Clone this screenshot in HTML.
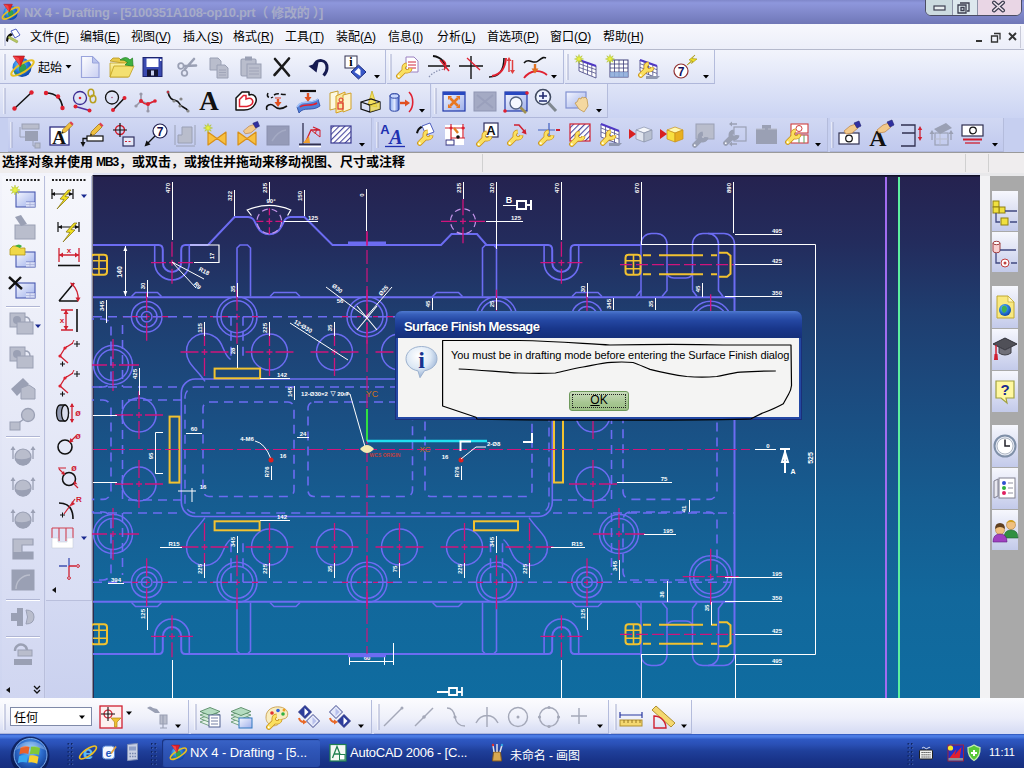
<!DOCTYPE html>
<html lang="zh"><head><meta charset="utf-8"><title>NX 4 - Drafting</title>
<style>
html,body{margin:0;padding:0}
body{width:1024px;height:768px;position:relative;overflow:hidden;background:#dfe3f4;font-family:"Liberation Sans","Noto Sans CJK SC",sans-serif;font-size:12px;color:#000}
.a{position:absolute}
#title{left:0;top:0;width:1024px;height:24px;background:linear-gradient(#7f87c9 0,#8e97dc 12%,#858dd0 40%,#7880c2 75%,#6f77b6 100%)}
#title .t{left:24px;top:2px;font:bold 13px "Liberation Sans","Noto Sans CJK SC",sans-serif;color:#a6abc8;white-space:nowrap;letter-spacing:-0.31px}
#menu{left:0;top:24px;width:1024px;height:25px;background:linear-gradient(#f7f8fd,#eceef9)}
#menu span{position:absolute;top:3px;font-size:12px;white-space:nowrap}
.tb{border-right:1px solid #b4bcdc;border-bottom:1px solid #afb7da;box-sizing:border-box}
.sep{width:1px;background:#a9afcf;border-right:1px solid #fff}
#cue{left:0;top:152px;width:1024px;height:21px;background:#efedee;border-top:1px solid #9a9a9a;box-sizing:border-box}
#cue .t{left:2px;top:-2px;font:bold 13px "Liberation Sans","Noto Sans CJK SC",sans-serif;white-space:nowrap}
#task{left:0;top:734px;width:1024px;height:34px;background:linear-gradient(#2950b4 0,#4f80ea 5%,#4878e0 9%,#2e58c2 16%,#2a50b6 30%,#1f3f9a 50%,#19348a 75%,#162e7e 100%)}
.tbtn{top:5px;height:28px;color:#fff;font-size:13px;white-space:nowrap;box-sizing:border-box;border-radius:3px}
.tbtn span{position:absolute;top:6px;letter-spacing:-0.1px}
</style></head><body>
<!-- title bar -->
<div id="title" class="a">
 <div class="a t" id="ttl">NX 4 - Drafting - [5100351A108-op10.prt（ 修改的 ）]</div>
 <div class="a" style="left:925px;top:-1px;width:95px;height:15px;border:1px solid #4b4d63;border-radius:0 0 6px 6px;overflow:hidden;background:#dde8ee">
  <div class="a" style="left:0;top:0;width:26px;height:16px;background:#ccdbe0;border-right:1px solid #8d93a8"></div>
  <div class="a" style="left:51px;top:0;width:46px;height:16px;background:#e9d6e5;border-left:1px solid #8d93a8"></div>
 </div>
</div>
<!-- menu bar -->
<div id="menu" class="a">
 <span style="left:30px">文件(<u>F</u>)</span><span style="left:80px">编辑(<u>E</u>)</span><span style="left:131px">视图(<u>V</u>)</span><span style="left:183px">插入(<u>S</u>)</span><span style="left:233px">格式(<u>R</u>)</span><span style="left:285px">工具(<u>T</u>)</span><span style="left:336px">装配(<u>A</u>)</span><span style="left:388px">信息(<u>I</u>)</span><span style="left:437px">分析(<u>L</u>)</span><span style="left:487px">首选项(<u>P</u>)</span><span style="left:550px">窗口(<u>O</u>)</span><span style="left:603px">帮助(<u>H</u>)</span>
</div>
<div class="a" style="left:0;top:49px;width:1024px;height:1px;background:#b5b9cc"></div>
<!-- toolbar area background -->
<div class="a" style="left:0;top:50px;width:1024px;height:68px;background:linear-gradient(#f2f4fc,#cbd4f3)"></div><div class="a" style="left:0;top:118px;width:1024px;height:34px;background:#c6cff0"></div>
<div class="a tb" style="left:0;top:50px;width:386px;height:34px;background:linear-gradient(#f3f5fc,#dfe4f6)"></div>
<div class="a tb" style="left:387px;top:50px;width:177px;height:34px;background:linear-gradient(#f3f5fc,#dfe4f6)"></div>
<div class="a tb" style="left:565px;top:50px;width:150px;height:34px;background:linear-gradient(#f3f5fc,#dfe4f6)"></div>
<div class="a tb" style="left:0;top:84px;width:431px;height:34px;background:linear-gradient(#e6eaf8,#d2d9f3)"></div>
<div class="a tb" style="left:432px;top:84px;width:176px;height:34px;background:linear-gradient(#e6eaf8,#d2d9f3)"></div>
<div class="a tb" style="left:8px;top:118px;width:364px;height:34px;background:linear-gradient(#d1d8f3,#c0c9ee)"></div>
<div class="a tb" style="left:374px;top:118px;width:454px;height:34px;background:linear-gradient(#d1d8f3,#c0c9ee)"></div>
<div class="a tb" style="left:830px;top:118px;width:174px;height:34px;background:linear-gradient(#d1d8f3,#c0c9ee)"></div>

<!-- cue line -->
<div id="cue" class="a"><div class="a t" id="cuet">选择对象并使用<span id="mb3" style="font-size:12px;display:inline-block;width:26px;text-align:center;letter-spacing:-1.1px;padding-left:2px;box-sizing:border-box">MB3</span>，或双击，或按住并拖动来移动视图、尺寸或注释</div>
 <div class="a" style="left:482px;top:1px;width:1px;height:18px;background:#d0d0d0"></div>
 <div class="a" style="left:965px;top:1px;width:1px;height:18px;background:#d0d0d0"></div>
 <div class="a" style="left:988px;top:1px;width:1px;height:18px;background:#d0d0d0"></div>
</div>
<!-- left toolbars -->
<div class="a" style="left:0;top:173px;width:93px;height:526px;background:linear-gradient(#f3f4fb,#e4e7f6 45%,#cdd4f0)"></div>
<div class="a" style="left:2px;top:176px;width:42px;height:522px;background:linear-gradient(#f6f7fc,#e6e9f7 45%,#d0d6f1);border-right:1px solid #b9bfdc"></div>
<div class="a" style="left:46px;top:176px;width:45px;height:424px;background:linear-gradient(#f6f7fc,#e8ebf8 50%,#d9def4);border-right:1px solid #b9bfdc;border-bottom:1px solid #b9bfdc"></div>
<div class="a" style="left:46px;top:601px;width:46px;height:97px;background:linear-gradient(#d3d9f2,#cad1ef)"></div>
<!-- right resource bar -->
<div class="a" style="left:980px;top:173px;width:10px;height:526px;background:#f2f2f4"></div>
<div class="a" style="left:990px;top:175px;width:34px;height:524px;background:#a9a9a9"></div>
<div class="a" style="left:980px;top:173px;width:44px;height:3px;background:#e8e8ea"></div>
<!-- bottom toolbar -->
<div class="a" style="left:0;top:698px;width:1024px;height:37px;background:linear-gradient(#fafbfe,#eceefa 55%,#d3d9f3)"></div>
<div class="a tb" style="left:0;top:700px;width:189px;height:34px;background:linear-gradient(#fbfbfe,#eef0fa 55%,#d6dcf4)"></div>
<div class="a tb" style="left:191px;top:700px;width:181px;height:34px;background:linear-gradient(#fbfbfe,#eef0fa 55%,#d6dcf4)"></div>
<div class="a tb" style="left:374px;top:700px;width:235px;height:34px;background:linear-gradient(#fbfbfe,#eef0fa 55%,#d6dcf4)"></div>
<div class="a tb" style="left:611px;top:700px;width:81px;height:34px;background:linear-gradient(#fbfbfe,#eef0fa 55%,#d6dcf4)"></div>
<div class="a" style="left:10px;top:707px;width:80px;height:17px;background:#fff;border:1px solid #7f8aa8"><span class="a" style="left:3px;top:0px;font-size:12px">任何</span></div>
<!-- taskbar -->
<div id="task" class="a">
 <div class="a tbtn" style="left:162px;width:158px;background:linear-gradient(#3a64c8,#2f56b8 40%,#274aa6);box-shadow:inset 1px 1px 1px #17307c"><span id="tk1" style="left:28px">NX 4 - Drafting - [5...</span></div>
 <div class="a tbtn" style="left:328px;width:152px"><span id="tk2" style="left:22px;letter-spacing:-0.25px">AutoCAD 2006 - [C...</span></div>
 <div class="a tbtn" style="left:488px;width:152px"><span id="tk3" style="left:22px;font-size:12px;top:7px">未命名 - 画图</span></div>
 <div class="a" style="left:989px;top:12px;color:#fff;font-size:11px" id="clk">11:11</div>
</div>
<svg class="a" style="left:92px;top:175px" width="888" height="523" viewBox="92 175 888 523" font-family="Liberation Sans, sans-serif">
<defs><linearGradient id="bg" x1="0" y1="0" x2="0" y2="1"><stop offset="0" stop-color="#25224f"/><stop offset="0.13" stop-color="#232c5d"/><stop offset="0.26" stop-color="#1f3d6f"/><stop offset="0.43" stop-color="#1b4c80"/><stop offset="0.62" stop-color="#165c90"/><stop offset="0.81" stop-color="#12689c"/><stop offset="1" stop-color="#0f6ca0"/></linearGradient></defs>
<rect x="92" y="175" width="888" height="523" fill="url(#bg)"/>
<rect x="92" y="175" width="888" height="1.500" fill="#121028"/><rect x="92" y="175" width="1" height="523" fill="#8a8a96"/><rect x="93" y="176" width="1" height="522" fill="#2c2b52"/>
<line x1="886" y1="177" x2="886" y2="698" stroke="#a26cf0" stroke-width="2"/>
<line x1="899" y1="177" x2="899" y2="698" stroke="#5cf0a0" stroke-width="2"/>
<path d="M208,245 L234.5,217 H248 C254,217 254.500,222 257.500,227 A13.300,13.300 0 0 0 281.100,227 C284.100,222 284.600,217 290.600,217 H304.5 L332.5,245 H441 L451.5,234 H477 L486.5,245 H547" stroke="#6c6cf2" stroke-width="2" fill="none"/>
<path d="M93,245 H154 M190,245 H208" stroke="#6c6cf2" stroke-width="2" fill="none"/>
<path d="M348,243.5 H386" stroke="#6c6cf2" stroke-width="4" fill="none"/>
<path d="M578,245 H641" stroke="#6c6cf2" stroke-width="2" fill="none"/>
<path d="M154.7,245 V262.7 A17.3,17.3 0 0 0 189.3,262.7 V245" stroke="#6c6cf2" stroke-width="1.6" fill="none"/>
<path d="M153.7,245 H158.8 Q162.8,245 162.8,250 V262.7 A9.2,9.2 0 0 0 181.2,262.7 V250 Q181.2,245 185.2,245 H190.3" stroke="#6c6cf2" stroke-width="2" fill="none"/>
<path d="M151,262.7 L166,262.7 M169,262.7 L175,262.7 M178,262.7 L193,262.7" stroke="#d0147c" stroke-width="1.3" fill="none"/>
<path d="M172,241.7 L172,256.7 M172,259.7 L172,265.7 M172,268.7 L172,283.7" stroke="#d0147c" stroke-width="1.3" fill="none"/>
<path d="M544.1,245 V262.7 A17.3,17.3 0 0 0 578.6999999999999,262.7 V245" stroke="#6c6cf2" stroke-width="1.6" fill="none"/>
<path d="M543.1,245 H548.1999999999999 Q552.1999999999999,245 552.1999999999999,250 V262.7 A9.2,9.2 0 0 0 570.6,262.7 V250 Q570.6,245 574.6,245 H579.6999999999999" stroke="#6c6cf2" stroke-width="2" fill="none"/>
<path d="M540.4,262.7 L555.4,262.7 M558.4,262.7 L564.4,262.7 M567.4,262.7 L582.4,262.7" stroke="#d0147c" stroke-width="1.3" fill="none"/>
<path d="M561.4,241.7 L561.4,256.7 M561.4,259.7 L561.4,265.7 M561.4,268.7 L561.4,283.7" stroke="#d0147c" stroke-width="1.3" fill="none"/>
<path d="M93,297.2 H735" stroke="#6c6cf2" stroke-width="2" fill="none"/>
<path d="M237,296.5 V248 L240,245 H247.5 L250.5,248 V296.5" stroke="#6c6cf2" stroke-width="1.6" fill="none"/>
<path d="M482.5,296.5 V248 L485.5,245 H493.5 L496.5,248 V296.5" stroke="#6c6cf2" stroke-width="1.6" fill="none"/>
<path d="M131.5,296.5 L135.5,292.5 H157.5 L161.5,296.5" stroke="#6c6cf2" stroke-width="1.5" fill="none"/>
<path d="M270,296.5 L274,292.5 H296 L300,296.5" stroke="#6c6cf2" stroke-width="1.5" fill="none"/>
<path d="M432.5,296.5 L436.5,292.5 H458.5 L462.5,296.5" stroke="#6c6cf2" stroke-width="1.5" fill="none"/>
<path d="M572,296.5 L576,292.5 H598 L602,296.5" stroke="#6c6cf2" stroke-width="1.5" fill="none"/>
<path d="M641,296.5 V244 A10.5,10.5 0 0 1 651.5,233.5 H656.5 A10.5,10.5 0 0 1 667,244 V290.5 L662,296.5" stroke="#6c6cf2" stroke-width="1.5" fill="none"/>
<path d="M641,290.5 L636,296.5" stroke="#6c6cf2" stroke-width="1.5" fill="none"/>
<path d="M692.5,290.5 V244 A10.5,10.5 0 0 1 703,233.5 H724 A10.5,10.5 0 0 1 734.5,244" stroke="#6c6cf2" stroke-width="1.5" fill="none"/>
<path d="M692.5,290.5 L697,296.5" stroke="#6c6cf2" stroke-width="1.5" fill="none"/>
<path d="M708,233.5 A10.5,10.5 0 0 1 718.5,244 V290.5 L723,296.5" stroke="#6c6cf2" stroke-width="1.6" fill="none"/>
<path d="M667,271 Q667,278 674,278 H686 Q692.5,278 692.5,271" stroke="#6c6cf2" stroke-width="1.6" fill="none"/>
<rect x="625.5" y="254.7" width="15" height="20" rx="3" fill="none" stroke="#f2c230" stroke-width="2"/>
<path d="M625.5,260.7 H640.5 M625.5,268.7 H640.5 M633.5,254.7 V274.7" stroke="#f2c230" stroke-width="1.6" fill="none"/>
<path d="M643,255.2 H651 M659,255.2 H703 M711,255.2 H717 M643,274.2 H651 M659,274.2 H703 M711,274.2 H717" stroke="#f2c230" stroke-width="2" fill="none"/>
<path d="M719,252.7 H727 L730.5,255.7 V273.7 L727,276.7 H719" stroke="#f2c230" stroke-width="2" fill="none"/>
<line x1="620" y1="264.7" x2="735" y2="264.7" stroke="#d0147c" stroke-width="1.2" stroke-dasharray="12 4"/>
<rect x="91" y="254.7" width="16" height="20" rx="3" fill="none" stroke="#f2c230" stroke-width="2"/>
<path d="M93,260.7 H107 M93,268.7 H107 M99,254.7 V274.7" stroke="#f2c230" stroke-width="1.6" fill="none"/>
<circle cx="146.7" cy="316.7" r="5.3" stroke="#6c6cf2" stroke-width="1.5" fill="none"/>
<circle cx="146.7" cy="316.7" r="10.3" stroke="#6c6cf2" stroke-width="1.5" fill="none"/>
<circle cx="146.7" cy="316.7" r="15.3" stroke="#6c6cf2" stroke-width="1.5" fill="none"/>
<path d="M122.69999999999999,316.7 L140.7,316.7 M143.7,316.7 L149.7,316.7 M152.7,316.7 L170.7,316.7" stroke="#d0147c" stroke-width="1.3" fill="none"/>
<path d="M146.7,292.7 L146.7,310.7 M146.7,313.7 L146.7,319.7 M146.7,322.7 L146.7,340.7" stroke="#d0147c" stroke-width="1.3" fill="none"/>
<circle cx="587" cy="316.7" r="5.3" stroke="#6c6cf2" stroke-width="1.5" fill="none"/>
<circle cx="587" cy="316.7" r="10.3" stroke="#6c6cf2" stroke-width="1.5" fill="none"/>
<circle cx="587" cy="316.7" r="15.3" stroke="#6c6cf2" stroke-width="1.5" fill="none"/>
<path d="M563,316.7 L581,316.7 M584,316.7 L590,316.7 M593,316.7 L611,316.7" stroke="#d0147c" stroke-width="1.3" fill="none"/>
<path d="M587,292.7 L587,310.7 M587,313.7 L587,319.7 M587,322.7 L587,340.7" stroke="#d0147c" stroke-width="1.3" fill="none"/>
<circle cx="237" cy="316.7" r="16" stroke="#6c6cf2" stroke-width="1.5" fill="none"/>
<circle cx="237" cy="316.7" r="20" stroke="#6c6cf2" stroke-width="1.5" fill="none"/>
<path d="M210,316.7 L231,316.7 M234,316.7 L240,316.7 M243,316.7 L264,316.7" stroke="#d0147c" stroke-width="1.3" fill="none"/>
<path d="M237,289.7 L237,310.7 M237,313.7 L237,319.7 M237,322.7 L237,343.7" stroke="#d0147c" stroke-width="1.3" fill="none"/>
<circle cx="367" cy="316.7" r="16" stroke="#6c6cf2" stroke-width="1.5" fill="none"/>
<circle cx="367" cy="316.7" r="20" stroke="#6c6cf2" stroke-width="1.5" fill="none"/>
<path d="M340,316.7 L361,316.7 M364,316.7 L370,316.7 M373,316.7 L394,316.7" stroke="#d0147c" stroke-width="1.3" fill="none"/>
<path d="M367,289.7 L367,310.7 M367,313.7 L367,319.7 M367,322.7 L367,343.7" stroke="#d0147c" stroke-width="1.3" fill="none"/>
<circle cx="496.5" cy="316.7" r="16" stroke="#6c6cf2" stroke-width="1.5" fill="none"/>
<circle cx="496.5" cy="316.7" r="20" stroke="#6c6cf2" stroke-width="1.5" fill="none"/>
<path d="M469.5,316.7 L490.5,316.7 M493.5,316.7 L499.5,316.7 M502.5,316.7 L523.5,316.7" stroke="#d0147c" stroke-width="1.3" fill="none"/>
<path d="M496.5,289.7 L496.5,310.7 M496.5,313.7 L496.5,319.7 M496.5,322.7 L496.5,343.7" stroke="#d0147c" stroke-width="1.3" fill="none"/>
<circle cx="710.7" cy="322.3" r="17" stroke="#6c6cf2" stroke-width="1.5" fill="none"/>
<circle cx="710.7" cy="322.3" r="21" stroke="#6c6cf2" stroke-width="1.5" fill="none"/>
<path d="M682.7,322.3 L704.7,322.3 M707.7,322.3 L713.7,322.3 M716.7,322.3 L738.7,322.3" stroke="#d0147c" stroke-width="1.3" fill="none"/>
<path d="M710.7,294.3 L710.7,316.3 M710.7,319.3 L710.7,325.3 M710.7,328.3 L710.7,350.3" stroke="#d0147c" stroke-width="1.3" fill="none"/>
<circle cx="269.5" cy="352" r="18" stroke="#6c6cf2" stroke-width="1.5" fill="none"/>
<path d="M245.5,352 L263.5,352 M266.5,352 L272.5,352 M275.5,352 L293.5,352" stroke="#d0147c" stroke-width="1.3" fill="none"/>
<path d="M269.5,328 L269.5,346 M269.5,349 L269.5,355 M269.5,358 L269.5,376" stroke="#d0147c" stroke-width="1.3" fill="none"/>
<circle cx="334.5" cy="352" r="18" stroke="#6c6cf2" stroke-width="1.5" fill="none"/>
<path d="M310.5,352 L328.5,352 M331.5,352 L337.5,352 M340.5,352 L358.5,352" stroke="#d0147c" stroke-width="1.3" fill="none"/>
<path d="M334.5,328 L334.5,346 M334.5,349 L334.5,355 M334.5,358 L334.5,376" stroke="#d0147c" stroke-width="1.3" fill="none"/>
<circle cx="399.5" cy="352" r="18" stroke="#6c6cf2" stroke-width="1.5" fill="none"/>
<path d="M375.5,352 L393.5,352 M396.5,352 L402.5,352 M405.5,352 L423.5,352" stroke="#d0147c" stroke-width="1.3" fill="none"/>
<path d="M399.5,328 L399.5,346 M399.5,349 L399.5,355 M399.5,358 L399.5,376" stroke="#d0147c" stroke-width="1.3" fill="none"/>
<circle cx="464.5" cy="352" r="18" stroke="#6c6cf2" stroke-width="1.5" fill="none"/>
<path d="M440.5,352 L458.5,352 M461.5,352 L467.5,352 M470.5,352 L488.5,352" stroke="#d0147c" stroke-width="1.3" fill="none"/>
<path d="M464.5,328 L464.5,346 M464.5,349 L464.5,355 M464.5,358 L464.5,376" stroke="#d0147c" stroke-width="1.3" fill="none"/>
<path d="M205.0,381.4 C196.5,369 186.5,363 186.5,352 A18,18 0 0 1 215.0,337 C224.0,342 222.0,353 230.5,359.5" stroke="#6c6cf2" stroke-width="1.5" fill="none"/>
<path d="M180.5,352 L198.5,352 M201.5,352 L207.5,352 M210.5,352 L228.5,352" stroke="#d0147c" stroke-width="1.3" fill="none"/>
<path d="M204.5,328 L204.5,346 M204.5,349 L204.5,355 M204.5,358 L204.5,376" stroke="#d0147c" stroke-width="1.3" fill="none"/>
<path d="M529.0,381.4 C537.5,369 547.5,363 547.5,352 A18,18 0 0 0 519.0,337 C510.0,342 512.0,353 503.5,359.5" stroke="#6c6cf2" stroke-width="1.5" fill="none"/>
<path d="M505.5,352 L523.5,352 M526.5,352 L532.5,352 M535.5,352 L553.5,352" stroke="#d0147c" stroke-width="1.3" fill="none"/>
<path d="M529.5,328 L529.5,346 M529.5,349 L529.5,355 M529.5,358 L529.5,376" stroke="#d0147c" stroke-width="1.3" fill="none"/>
<path d="M231,316.7 V359.7 M243,316.7 V359.7" stroke="#6c6cf2" stroke-width="1.6" fill="none" stroke-dasharray="9 6"/>
<path d="M490.5,316.7 V359.7 M502.5,316.7 V359.7" stroke="#6c6cf2" stroke-width="1.6" fill="none" stroke-dasharray="9 6"/>
<circle cx="113" cy="365" r="15.5" stroke="#6c6cf2" stroke-width="1.5" fill="none"/>
<circle cx="113" cy="365" r="19.5" stroke="#6c6cf2" stroke-width="1.5" fill="none"/>
<path d="M87,365 L107,365 M110,365 L116,365 M119,365 L139,365" stroke="#d0147c" stroke-width="1.3" fill="none"/>
<path d="M113,339 L113,359 M113,362 L113,368 M113,371 L113,391" stroke="#d0147c" stroke-width="1.3" fill="none"/>
<circle cx="619" cy="365" r="15.5" stroke="#6c6cf2" stroke-width="1.5" fill="none"/>
<circle cx="619" cy="365" r="19.5" stroke="#6c6cf2" stroke-width="1.5" fill="none"/>
<path d="M593,365 L613,365 M616,365 L622,365 M625,365 L645,365" stroke="#d0147c" stroke-width="1.3" fill="none"/>
<path d="M619,339 L619,359 M619,362 L619,368 M619,371 L619,391" stroke="#d0147c" stroke-width="1.3" fill="none"/>
<circle cx="139" cy="415" r="17" stroke="#6c6cf2" stroke-width="1.5" fill="none"/>
<path d="M115,415 L133,415 M136,415 L142,415 M145,415 L163,415" stroke="#d0147c" stroke-width="1.3" fill="none"/>
<path d="M139,391 L139,409 M139,412 L139,418 M139,421 L139,439" stroke="#d0147c" stroke-width="1.3" fill="none"/>
<circle cx="593" cy="415" r="17" stroke="#6c6cf2" stroke-width="1.5" fill="none"/>
<path d="M569,415 L587,415 M590,415 L596,415 M599,415 L617,415" stroke="#d0147c" stroke-width="1.3" fill="none"/>
<path d="M593,391 L593,409 M593,412 L593,418 M593,421 L593,439" stroke="#d0147c" stroke-width="1.3" fill="none"/>
<path d="M93,316.7 H735" stroke="#6c6cf2" stroke-width="1.6" fill="none" stroke-dasharray="9 6"/>
<path d="M93,654.0 H154 M190,654.0 H547 M578,654.0 H641" stroke="#6c6cf2" stroke-width="2" fill="none"/>
<path d="M154.7,654.0 V636.3 A17.3,17.3 0 0 1 189.3,636.3 V654.0" stroke="#6c6cf2" stroke-width="1.6" fill="none"/>
<path d="M153.7,654.0 H158.8 Q162.8,654.0 162.8,649.0 V636.3 A9.2,9.2 0 0 1 181.2,636.3 V649.0 Q181.2,654.0 185.2,654.0 H190.3" stroke="#6c6cf2" stroke-width="2" fill="none"/>
<path d="M151,636.3 L166,636.3 M169,636.3 L175,636.3 M178,636.3 L193,636.3" stroke="#d0147c" stroke-width="1.3" fill="none"/>
<path d="M172,615.3 L172,630.3 M172,633.3 L172,639.3 M172,642.3 L172,657.3" stroke="#d0147c" stroke-width="1.3" fill="none"/>
<path d="M544.1,654.0 V636.3 A17.3,17.3 0 0 1 578.6999999999999,636.3 V654.0" stroke="#6c6cf2" stroke-width="1.6" fill="none"/>
<path d="M543.1,654.0 H548.1999999999999 Q552.1999999999999,654.0 552.1999999999999,649.0 V636.3 A9.2,9.2 0 0 1 570.6,636.3 V649.0 Q570.6,654.0 574.6,654.0 H579.6999999999999" stroke="#6c6cf2" stroke-width="2" fill="none"/>
<path d="M540.4,636.3 L555.4,636.3 M558.4,636.3 L564.4,636.3 M567.4,636.3 L582.4,636.3" stroke="#d0147c" stroke-width="1.3" fill="none"/>
<path d="M561.4,615.3 L561.4,630.3 M561.4,633.3 L561.4,639.3 M561.4,642.3 L561.4,657.3" stroke="#d0147c" stroke-width="1.3" fill="none"/>
<path d="M93,601.8 H735" stroke="#6c6cf2" stroke-width="2" fill="none"/>
<path d="M237,602.5 V651.0 L240,654.0 H247.5 L250.5,651.0 V602.5" stroke="#6c6cf2" stroke-width="1.6" fill="none"/>
<path d="M482.5,602.5 V651.0 L485.5,654.0 H493.5 L496.5,651.0 V602.5" stroke="#6c6cf2" stroke-width="1.6" fill="none"/>
<path d="M131.5,602.5 L135.5,606.5 H157.5 L161.5,602.5" stroke="#6c6cf2" stroke-width="1.5" fill="none"/>
<path d="M270,602.5 L274,606.5 H296 L300,602.5" stroke="#6c6cf2" stroke-width="1.5" fill="none"/>
<path d="M432.5,602.5 L436.5,606.5 H458.5 L462.5,602.5" stroke="#6c6cf2" stroke-width="1.5" fill="none"/>
<path d="M572,602.5 L576,606.5 H598 L602,602.5" stroke="#6c6cf2" stroke-width="1.5" fill="none"/>
<path d="M641,602.5 V655.0 A10.5,10.5 0 0 0 651.5,665.5 H656.5 A10.5,10.5 0 0 0 667,655.0 V608.5 L662,602.5" stroke="#6c6cf2" stroke-width="1.5" fill="none"/>
<path d="M641,608.5 L636,602.5" stroke="#6c6cf2" stroke-width="1.5" fill="none"/>
<path d="M692.5,608.5 V655.0 A10.5,10.5 0 0 0 703,665.5 H724 A10.5,10.5 0 0 0 734.5,655.0" stroke="#6c6cf2" stroke-width="1.5" fill="none"/>
<path d="M692.5,608.5 L697,602.5" stroke="#6c6cf2" stroke-width="1.5" fill="none"/>
<path d="M708,665.5 A10.5,10.5 0 0 0 718.5,655.0 V608.5 L723,602.5" stroke="#6c6cf2" stroke-width="1.6" fill="none"/>
<path d="M667,628.0 Q667,621.0 674,621.0 H686 Q692.5,621.0 692.5,628.0" stroke="#6c6cf2" stroke-width="1.6" fill="none"/>
<rect x="625.5" y="624.3" width="15" height="20" rx="3" fill="none" stroke="#f2c230" stroke-width="2"/>
<path d="M625.5,630.3 H640.5 M625.5,638.3 H640.5 M633.5,624.3 V644.3" stroke="#f2c230" stroke-width="1.6" fill="none"/>
<path d="M643,624.8 H651 M659,624.8 H703 M711,624.8 H717 M643,643.8 H651 M659,643.8 H703 M711,643.8 H717" stroke="#f2c230" stroke-width="2" fill="none"/>
<path d="M719,622.3 H727 L730.5,625.3 V643.3 L727,646.3 H719" stroke="#f2c230" stroke-width="2" fill="none"/>
<line x1="620" y1="634.3" x2="735" y2="634.3" stroke="#d0147c" stroke-width="1.2" stroke-dasharray="12 4"/>
<rect x="91" y="624.3" width="16" height="20" rx="3" fill="none" stroke="#f2c230" stroke-width="2"/>
<path d="M93,630.3 H107 M93,638.3 H107 M99,624.3 V644.3" stroke="#f2c230" stroke-width="1.6" fill="none"/>
<circle cx="146.7" cy="582.3" r="5.3" stroke="#6c6cf2" stroke-width="1.5" fill="none"/>
<circle cx="146.7" cy="582.3" r="10.3" stroke="#6c6cf2" stroke-width="1.5" fill="none"/>
<circle cx="146.7" cy="582.3" r="15.3" stroke="#6c6cf2" stroke-width="1.5" fill="none"/>
<path d="M122.69999999999999,582.3 L140.7,582.3 M143.7,582.3 L149.7,582.3 M152.7,582.3 L170.7,582.3" stroke="#d0147c" stroke-width="1.3" fill="none"/>
<path d="M146.7,558.3 L146.7,576.3 M146.7,579.3 L146.7,585.3 M146.7,588.3 L146.7,606.3" stroke="#d0147c" stroke-width="1.3" fill="none"/>
<circle cx="587" cy="582.3" r="5.3" stroke="#6c6cf2" stroke-width="1.5" fill="none"/>
<circle cx="587" cy="582.3" r="10.3" stroke="#6c6cf2" stroke-width="1.5" fill="none"/>
<circle cx="587" cy="582.3" r="15.3" stroke="#6c6cf2" stroke-width="1.5" fill="none"/>
<path d="M563,582.3 L581,582.3 M584,582.3 L590,582.3 M593,582.3 L611,582.3" stroke="#d0147c" stroke-width="1.3" fill="none"/>
<path d="M587,558.3 L587,576.3 M587,579.3 L587,585.3 M587,588.3 L587,606.3" stroke="#d0147c" stroke-width="1.3" fill="none"/>
<circle cx="237" cy="582.3" r="16" stroke="#6c6cf2" stroke-width="1.5" fill="none"/>
<circle cx="237" cy="582.3" r="20" stroke="#6c6cf2" stroke-width="1.5" fill="none"/>
<path d="M210,582.3 L231,582.3 M234,582.3 L240,582.3 M243,582.3 L264,582.3" stroke="#d0147c" stroke-width="1.3" fill="none"/>
<path d="M237,555.3 L237,576.3 M237,579.3 L237,585.3 M237,588.3 L237,609.3" stroke="#d0147c" stroke-width="1.3" fill="none"/>
<circle cx="367" cy="582.3" r="16" stroke="#6c6cf2" stroke-width="1.5" fill="none"/>
<circle cx="367" cy="582.3" r="20" stroke="#6c6cf2" stroke-width="1.5" fill="none"/>
<path d="M340,582.3 L361,582.3 M364,582.3 L370,582.3 M373,582.3 L394,582.3" stroke="#d0147c" stroke-width="1.3" fill="none"/>
<path d="M367,555.3 L367,576.3 M367,579.3 L367,585.3 M367,588.3 L367,609.3" stroke="#d0147c" stroke-width="1.3" fill="none"/>
<circle cx="496.5" cy="582.3" r="16" stroke="#6c6cf2" stroke-width="1.5" fill="none"/>
<circle cx="496.5" cy="582.3" r="20" stroke="#6c6cf2" stroke-width="1.5" fill="none"/>
<path d="M469.5,582.3 L490.5,582.3 M493.5,582.3 L499.5,582.3 M502.5,582.3 L523.5,582.3" stroke="#d0147c" stroke-width="1.3" fill="none"/>
<path d="M496.5,555.3 L496.5,576.3 M496.5,579.3 L496.5,585.3 M496.5,588.3 L496.5,609.3" stroke="#d0147c" stroke-width="1.3" fill="none"/>
<circle cx="710.7" cy="576.7" r="17" stroke="#6c6cf2" stroke-width="1.5" fill="none"/>
<circle cx="710.7" cy="576.7" r="21" stroke="#6c6cf2" stroke-width="1.5" fill="none"/>
<path d="M682.7,576.7 L704.7,576.7 M707.7,576.7 L713.7,576.7 M716.7,576.7 L738.7,576.7" stroke="#d0147c" stroke-width="1.3" fill="none"/>
<path d="M710.7,548.7 L710.7,570.7 M710.7,573.7 L710.7,579.7 M710.7,582.7 L710.7,604.7" stroke="#d0147c" stroke-width="1.3" fill="none"/>
<circle cx="269.5" cy="547.0" r="18" stroke="#6c6cf2" stroke-width="1.5" fill="none"/>
<path d="M245.5,547.0 L263.5,547.0 M266.5,547.0 L272.5,547.0 M275.5,547.0 L293.5,547.0" stroke="#d0147c" stroke-width="1.3" fill="none"/>
<path d="M269.5,523.0 L269.5,541.0 M269.5,544.0 L269.5,550.0 M269.5,553.0 L269.5,571.0" stroke="#d0147c" stroke-width="1.3" fill="none"/>
<circle cx="334.5" cy="547.0" r="18" stroke="#6c6cf2" stroke-width="1.5" fill="none"/>
<path d="M310.5,547.0 L328.5,547.0 M331.5,547.0 L337.5,547.0 M340.5,547.0 L358.5,547.0" stroke="#d0147c" stroke-width="1.3" fill="none"/>
<path d="M334.5,523.0 L334.5,541.0 M334.5,544.0 L334.5,550.0 M334.5,553.0 L334.5,571.0" stroke="#d0147c" stroke-width="1.3" fill="none"/>
<circle cx="399.5" cy="547.0" r="18" stroke="#6c6cf2" stroke-width="1.5" fill="none"/>
<path d="M375.5,547.0 L393.5,547.0 M396.5,547.0 L402.5,547.0 M405.5,547.0 L423.5,547.0" stroke="#d0147c" stroke-width="1.3" fill="none"/>
<path d="M399.5,523.0 L399.5,541.0 M399.5,544.0 L399.5,550.0 M399.5,553.0 L399.5,571.0" stroke="#d0147c" stroke-width="1.3" fill="none"/>
<circle cx="464.5" cy="547.0" r="18" stroke="#6c6cf2" stroke-width="1.5" fill="none"/>
<path d="M440.5,547.0 L458.5,547.0 M461.5,547.0 L467.5,547.0 M470.5,547.0 L488.5,547.0" stroke="#d0147c" stroke-width="1.3" fill="none"/>
<path d="M464.5,523.0 L464.5,541.0 M464.5,544.0 L464.5,550.0 M464.5,553.0 L464.5,571.0" stroke="#d0147c" stroke-width="1.3" fill="none"/>
<path d="M205.0,517.6 C196.5,530.0 186.5,536.0 186.5,547.0 A18,18 0 0 0 215.0,562.0 C224.0,557.0 222.0,546.0 230.5,539.5" stroke="#6c6cf2" stroke-width="1.5" fill="none"/>
<path d="M180.5,547.0 L198.5,547.0 M201.5,547.0 L207.5,547.0 M210.5,547.0 L228.5,547.0" stroke="#d0147c" stroke-width="1.3" fill="none"/>
<path d="M204.5,523.0 L204.5,541.0 M204.5,544.0 L204.5,550.0 M204.5,553.0 L204.5,571.0" stroke="#d0147c" stroke-width="1.3" fill="none"/>
<path d="M529.0,517.6 C537.5,530.0 547.5,536.0 547.5,547.0 A18,18 0 0 1 519.0,562.0 C510.0,557.0 512.0,546.0 503.5,539.5" stroke="#6c6cf2" stroke-width="1.5" fill="none"/>
<path d="M505.5,547.0 L523.5,547.0 M526.5,547.0 L532.5,547.0 M535.5,547.0 L553.5,547.0" stroke="#d0147c" stroke-width="1.3" fill="none"/>
<path d="M529.5,523.0 L529.5,541.0 M529.5,544.0 L529.5,550.0 M529.5,553.0 L529.5,571.0" stroke="#d0147c" stroke-width="1.3" fill="none"/>
<path d="M231,582.3 V539.3 M243,582.3 V539.3" stroke="#6c6cf2" stroke-width="1.6" fill="none" stroke-dasharray="9 6"/>
<path d="M490.5,582.3 V539.3 M502.5,582.3 V539.3" stroke="#6c6cf2" stroke-width="1.6" fill="none" stroke-dasharray="9 6"/>
<circle cx="113" cy="534.0" r="15.5" stroke="#6c6cf2" stroke-width="1.5" fill="none"/>
<circle cx="113" cy="534.0" r="19.5" stroke="#6c6cf2" stroke-width="1.5" fill="none"/>
<path d="M87,534.0 L107,534.0 M110,534.0 L116,534.0 M119,534.0 L139,534.0" stroke="#d0147c" stroke-width="1.3" fill="none"/>
<path d="M113,508.0 L113,528.0 M113,531.0 L113,537.0 M113,540.0 L113,560.0" stroke="#d0147c" stroke-width="1.3" fill="none"/>
<circle cx="619" cy="534.0" r="15.5" stroke="#6c6cf2" stroke-width="1.5" fill="none"/>
<circle cx="619" cy="534.0" r="19.5" stroke="#6c6cf2" stroke-width="1.5" fill="none"/>
<path d="M593,534.0 L613,534.0 M616,534.0 L622,534.0 M625,534.0 L645,534.0" stroke="#d0147c" stroke-width="1.3" fill="none"/>
<path d="M619,508.0 L619,528.0 M619,531.0 L619,537.0 M619,540.0 L619,560.0" stroke="#d0147c" stroke-width="1.3" fill="none"/>
<circle cx="139" cy="484.0" r="17" stroke="#6c6cf2" stroke-width="1.5" fill="none"/>
<path d="M115,484.0 L133,484.0 M136,484.0 L142,484.0 M145,484.0 L163,484.0" stroke="#d0147c" stroke-width="1.3" fill="none"/>
<path d="M139,460.0 L139,478.0 M139,481.0 L139,487.0 M139,490.0 L139,508.0" stroke="#d0147c" stroke-width="1.3" fill="none"/>
<circle cx="593" cy="484.0" r="17" stroke="#6c6cf2" stroke-width="1.5" fill="none"/>
<path d="M569,484.0 L587,484.0 M590,484.0 L596,484.0 M599,484.0 L617,484.0" stroke="#d0147c" stroke-width="1.3" fill="none"/>
<path d="M593,460.0 L593,478.0 M593,481.0 L593,487.0 M593,490.0 L593,508.0" stroke="#d0147c" stroke-width="1.3" fill="none"/>
<path d="M93,582.3 H735" stroke="#6c6cf2" stroke-width="1.6" fill="none" stroke-dasharray="9 6"/>
<path d="M734.5,245 V655" stroke="#6c6cf2" stroke-width="2" fill="none"/>
<rect x="181.3" y="379" width="371" height="137.5" rx="14" fill="none" stroke="#6c6cf2" stroke-width="1.6"/>
<rect x="185" y="387" width="364" height="126" rx="10" fill="none" stroke="#6c6cf2" stroke-width="1.5" stroke-dasharray="9 6"/>
<rect x="203" y="402" width="91" height="94.5" rx="6" fill="none" stroke="#6c6cf2" stroke-width="1.6" stroke-dasharray="9 6"/>
<rect x="308" y="402" width="104.5" height="94.5" rx="6" fill="none" stroke="#6c6cf2" stroke-width="1.6" stroke-dasharray="9 6"/>
<rect x="425" y="402" width="107" height="94.5" rx="6" fill="none" stroke="#6c6cf2" stroke-width="1.6" stroke-dasharray="9 6"/>
<rect x="623" y="400" width="94" height="99.4" rx="8" fill="none" stroke="#6c6cf2" stroke-width="1.6" stroke-dasharray="9 6"/>
<rect x="17" y="400" width="94" height="99.4" rx="8" fill="none" stroke="#6c6cf2" stroke-width="1.6" stroke-dasharray="9 6"/>
<rect x="623" y="512" width="94" height="68" rx="8" fill="none" stroke="#6c6cf2" stroke-width="1.6" stroke-dasharray="9 6"/>
<rect x="17" y="512" width="94" height="68" rx="8" fill="none" stroke="#6c6cf2" stroke-width="1.6" stroke-dasharray="9 6"/>
<rect x="623" y="319" width="94" height="68" rx="8" fill="none" stroke="#6c6cf2" stroke-width="1.6" stroke-dasharray="9 6"/>
<rect x="17" y="319" width="94" height="68" rx="8" fill="none" stroke="#6c6cf2" stroke-width="1.6" stroke-dasharray="9 6"/>
<path d="M122.5,325 V387 M122.5,400 V499 M122.5,513 V575 M611.5,325 V387 M611.5,400 V499 M611.5,513 V575" stroke="#6c6cf2" stroke-width="1.6" fill="none" stroke-dasharray="9 6"/>
<path d="M128,500 H181 M93,513 H181 M93,387 H181 M128,400 H181" stroke="#6c6cf2" stroke-width="1.6" fill="none" stroke-dasharray="9 6"/>
<path d="M553,500 H606 M553,513 H735 M553,387 H735 M553,400 H606" stroke="#6c6cf2" stroke-width="1.6" fill="none" stroke-dasharray="9 6"/>
<rect x="214.6" y="368.6" width="45.5" height="9.7" fill="none" stroke="#f2c230" stroke-width="2"/>
<rect x="214.6" y="521.3" width="45" height="9" fill="none" stroke="#f2c230" stroke-width="2"/>
<rect x="474" y="521.3" width="44" height="9" fill="none" stroke="#f2c230" stroke-width="2"/>
<rect x="474" y="368.6" width="44" height="9.7" fill="none" stroke="#f2c230" stroke-width="2"/>
<rect x="169.6" y="416.6" width="9.8" height="66" fill="none" stroke="#f2c230" stroke-width="2"/>
<rect x="554" y="417" width="9" height="65.5" fill="none" stroke="#f2c230" stroke-width="2"/>
<line x1="93" y1="449.5" x2="750" y2="449.5" stroke="#d0147c" stroke-width="1.2" stroke-dasharray="14 4"/>
<line x1="367" y1="232" x2="367" y2="660" stroke="#d0147c" stroke-width="1.2" stroke-dasharray="14 4"/>
<path d="M641,244.500 H815.500 V654.500 H641" stroke="#ffffff" stroke-width="1" fill="none"/>
<line x1="172.5" y1="182" x2="172.5" y2="240" stroke="#ffffff" stroke-width="1"/>
<text x="169.9" y="188" font-size="6" font-weight="bold" fill="#ffffff" text-anchor="middle" transform="rotate(-90 169.9 188)">470</text>
<line x1="366.5" y1="189" x2="366.5" y2="231" stroke="#ffffff" stroke-width="1"/>
<text x="364.1" y="195" font-size="6" font-weight="bold" fill="#ffffff" text-anchor="middle" transform="rotate(-90 364.1 195)">0</text>
<line x1="463.5" y1="182" x2="463.5" y2="199" stroke="#ffffff" stroke-width="1"/>
<text x="460.5" y="188" font-size="6" font-weight="bold" fill="#ffffff" text-anchor="middle" transform="rotate(-90 460.5 188)">235</text>
<line x1="496.5" y1="182" x2="496.5" y2="249" stroke="#ffffff" stroke-width="1"/>
<text x="493.8" y="188" font-size="6" font-weight="bold" fill="#ffffff" text-anchor="middle" transform="rotate(-90 493.8 188)">320</text>
<line x1="561.5" y1="182" x2="561.5" y2="240" stroke="#ffffff" stroke-width="1"/>
<text x="558.9" y="188" font-size="6" font-weight="bold" fill="#ffffff" text-anchor="middle" transform="rotate(-90 558.9 188)">470</text>
<line x1="641.5" y1="182" x2="641.5" y2="245" stroke="#ffffff" stroke-width="1"/>
<text x="638.8" y="188" font-size="6" font-weight="bold" fill="#ffffff" text-anchor="middle" transform="rotate(-90 638.8 188)">670</text>
<line x1="234.5" y1="190" x2="234.5" y2="216" stroke="#ffffff" stroke-width="1"/>
<text x="232.0" y="196" font-size="6" font-weight="bold" fill="#ffffff" text-anchor="middle" transform="rotate(-90 232.0 196)">322</text>
<line x1="269.5" y1="182" x2="269.5" y2="200" stroke="#ffffff" stroke-width="1"/>
<text x="266.9" y="188" font-size="6" font-weight="bold" fill="#ffffff" text-anchor="middle" transform="rotate(-90 266.9 188)">235</text>
<line x1="304.5" y1="190" x2="304.5" y2="216" stroke="#ffffff" stroke-width="1"/>
<text x="302.0" y="196" font-size="6" font-weight="bold" fill="#ffffff" text-anchor="middle" transform="rotate(-90 302.0 196)">150</text>
<line x1="733.5" y1="182" x2="733.5" y2="233" stroke="#ffffff" stroke-width="1"/>
<text x="731.0" y="188" font-size="6" font-weight="bold" fill="#ffffff" text-anchor="middle" transform="rotate(-90 731.0 188)">890</text>
<line x1="367" y1="231" x2="367" y2="245" stroke="#d0147c" stroke-width="1.3"/>
<line x1="172.5" y1="660" x2="172.5" y2="698" stroke="#ffffff" stroke-width="1"/>
<line x1="561.5" y1="660" x2="561.5" y2="698" stroke="#ffffff" stroke-width="1"/>
<line x1="641.5" y1="655" x2="641.5" y2="698" stroke="#ffffff" stroke-width="1"/>
<line x1="735.5" y1="655" x2="735.5" y2="698" stroke="#ffffff" stroke-width="1"/>
<line x1="735" y1="234.5" x2="782" y2="234.5" stroke="#ffffff" stroke-width="1"/>
<text x="777" y="232.5" font-size="6" font-weight="bold" fill="#ffffff" text-anchor="middle">495</text>
<line x1="735" y1="264.5" x2="782" y2="264.5" stroke="#ffffff" stroke-width="1"/>
<text x="777" y="263.0" font-size="6" font-weight="bold" fill="#ffffff" text-anchor="middle">425</text>
<line x1="725" y1="296.5" x2="782" y2="296.5" stroke="#ffffff" stroke-width="1"/>
<text x="777" y="295.0" font-size="6" font-weight="bold" fill="#ffffff" text-anchor="middle">350</text>
<line x1="725" y1="577.5" x2="782" y2="577.5" stroke="#ffffff" stroke-width="1"/>
<text x="777" y="576.0" font-size="6" font-weight="bold" fill="#ffffff" text-anchor="middle">195</text>
<line x1="725" y1="601.5" x2="782" y2="601.5" stroke="#ffffff" stroke-width="1"/>
<text x="777" y="600.0" font-size="6" font-weight="bold" fill="#ffffff" text-anchor="middle">350</text>
<line x1="735" y1="634.5" x2="782" y2="634.5" stroke="#ffffff" stroke-width="1"/>
<text x="777" y="632.5" font-size="6" font-weight="bold" fill="#ffffff" text-anchor="middle">425</text>
<line x1="735" y1="664.5" x2="782" y2="664.5" stroke="#ffffff" stroke-width="1"/>
<text x="777" y="663.0" font-size="6" font-weight="bold" fill="#ffffff" text-anchor="middle">495</text>
<line x1="125.5" y1="246" x2="125.5" y2="296" stroke="#ffffff" stroke-width="1"/>
<text x="122" y="272" font-size="7" font-weight="bold" fill="#ffffff" text-anchor="middle" transform="rotate(-90 122 272)">140</text>
<path d="M125.3,246 l-2,5 h4z M125.3,296 l-2,-5 h4z" fill="#ffffff"/>
<path d="M190,245 H219 V262.5 H194" stroke="#ffffff" stroke-width="1.2" fill="none"/>
<text x="214" y="256" font-size="6" font-weight="bold" fill="#ffffff" text-anchor="middle" transform="rotate(-90 214 256)">17</text>
<line x1="172" y1="262" x2="204" y2="279" stroke="#ffffff" stroke-width="1"/>
<line x1="172" y1="262" x2="196" y2="288" stroke="#ffffff" stroke-width="1"/>
<text x="203" y="273" font-size="6" font-weight="bold" fill="#ffffff" text-anchor="middle" transform="rotate(28 203 273)">R18</text>
<text x="196" y="287" font-size="6" font-weight="bold" fill="#ffffff" text-anchor="middle" transform="rotate(48 196 287)">R9</text>
<line x1="284" y1="221.5" x2="318" y2="221.5" stroke="#ffffff" stroke-width="1"/>
<text x="313" y="220.0" font-size="6" font-weight="bold" fill="#ffffff" text-anchor="middle">125</text>
<path d="M251.500,215.500 L247.200,210 Q269.300,200.800 290.800,210 L287.600,215.500" stroke="#ffffff" stroke-width="1.2" fill="none"/>
<text x="271" y="203" font-size="6" font-weight="bold" fill="#ffffff" text-anchor="middle">90°</text>
<circle cx="269.3" cy="221.3" r="12.3" stroke="#c494ea" stroke-width="1.2" fill="none" stroke-dasharray="6 4"/>
<path d="M256.4,221.3 L263.4,221.3 M266.4,221.3 L272.4,221.3 M275.4,221.3 L282.4,221.3" stroke="#d0147c" stroke-width="1.3" fill="none"/>
<path d="M269.4,208.3 L269.4,215.3 M269.4,218.3 L269.4,224.3 M269.4,227.3 L269.4,234.3" stroke="#d0147c" stroke-width="1.3" fill="none"/>
<circle cx="463" cy="221.3" r="12.5" stroke="#c494ea" stroke-width="1.2" fill="none" stroke-dasharray="6 4"/>
<path d="M441,221.3 L457,221.3 M460,221.3 L466,221.3 M469,221.3 L485,221.3" stroke="#d0147c" stroke-width="1.3" fill="none"/>
<path d="M463,199.3 L463,215.3 M463,218.3 L463,224.3 M463,227.3 L463,243.3" stroke="#d0147c" stroke-width="1.3" fill="none"/>
<line x1="486" y1="221.5" x2="523" y2="221.5" stroke="#ffffff" stroke-width="1"/>
<text x="516" y="220.0" font-size="6" font-weight="bold" fill="#ffffff" text-anchor="middle">125</text>
<text x="509" y="203" font-size="9" font-weight="bold" fill="#ffffff" text-anchor="middle">B</text>
<line x1="503" y1="205.5" x2="518" y2="205.5" stroke="#ffffff" stroke-width="1"/>
<path d="M517,201 h9 v8 h-9z M526,205 h5 M531,200 v10" stroke="#ffffff" stroke-width="2" fill="none"/>
<line x1="147.5" y1="280" x2="147.5" y2="297" stroke="#ffffff" stroke-width="1"/>
<text x="144.5" y="286" font-size="6" font-weight="bold" fill="#ffffff" text-anchor="middle" transform="rotate(-90 144.5 286)">30</text>
<line x1="237.5" y1="283" x2="237.5" y2="297" stroke="#ffffff" stroke-width="1"/>
<text x="234.5" y="289" font-size="6" font-weight="bold" fill="#ffffff" text-anchor="middle" transform="rotate(-90 234.5 289)">35</text>
<line x1="204.5" y1="322" x2="204.5" y2="336" stroke="#ffffff" stroke-width="1"/>
<text x="201.5" y="328" font-size="6" font-weight="bold" fill="#ffffff" text-anchor="middle" transform="rotate(-90 201.5 328)">115</text>
<line x1="269.5" y1="322" x2="269.5" y2="336" stroke="#ffffff" stroke-width="1"/>
<text x="266.5" y="328" font-size="6" font-weight="bold" fill="#ffffff" text-anchor="middle" transform="rotate(-90 266.5 328)">225</text>
<line x1="334.5" y1="322" x2="334.5" y2="336" stroke="#ffffff" stroke-width="1"/>
<text x="331.5" y="328" font-size="6" font-weight="bold" fill="#ffffff" text-anchor="middle" transform="rotate(-90 331.5 328)">35</text>
<line x1="237.5" y1="345" x2="237.5" y2="368" stroke="#ffffff" stroke-width="1"/>
<text x="234.5" y="351" font-size="6" font-weight="bold" fill="#ffffff" text-anchor="middle" transform="rotate(-90 234.5 351)">28</text>
<line x1="106.5" y1="300" x2="106.5" y2="323" stroke="#ffffff" stroke-width="1"/>
<text x="103.5" y="306" font-size="6" font-weight="bold" fill="#ffffff" text-anchor="middle" transform="rotate(-90 103.5 306)">345</text>
<line x1="139.5" y1="368" x2="139.5" y2="395" stroke="#ffffff" stroke-width="1"/>
<text x="136.5" y="374" font-size="6" font-weight="bold" fill="#ffffff" text-anchor="middle" transform="rotate(-90 136.5 374)">425</text>
<line x1="432.5" y1="298" x2="432.5" y2="310" stroke="#ffffff" stroke-width="1"/>
<text x="429.5" y="304" font-size="6" font-weight="bold" fill="#ffffff" text-anchor="middle" transform="rotate(-90 429.5 304)">45</text>
<line x1="496.5" y1="298" x2="496.5" y2="310" stroke="#ffffff" stroke-width="1"/>
<text x="494.0" y="304" font-size="6" font-weight="bold" fill="#ffffff" text-anchor="middle" transform="rotate(-90 494.0 304)">25</text>
<line x1="587.5" y1="283" x2="587.5" y2="297" stroke="#ffffff" stroke-width="1"/>
<text x="584.5" y="289" font-size="6" font-weight="bold" fill="#ffffff" text-anchor="middle" transform="rotate(-90 584.5 289)">30</text>
<line x1="613.5" y1="298" x2="613.5" y2="310" stroke="#ffffff" stroke-width="1"/>
<text x="610.5" y="304" font-size="6" font-weight="bold" fill="#ffffff" text-anchor="middle" transform="rotate(-90 610.5 304)">345</text>
<line x1="655.5" y1="298" x2="655.5" y2="310" stroke="#ffffff" stroke-width="1"/>
<text x="652.5" y="304" font-size="6" font-weight="bold" fill="#ffffff" text-anchor="middle" transform="rotate(-90 652.5 304)">35</text>
<line x1="702.5" y1="283" x2="702.5" y2="297" stroke="#ffffff" stroke-width="1"/>
<text x="699.5" y="289" font-size="6" font-weight="bold" fill="#ffffff" text-anchor="middle" transform="rotate(-90 699.5 289)">45</text>
<line x1="204.5" y1="563" x2="204.5" y2="578" stroke="#ffffff" stroke-width="1"/>
<text x="201.5" y="569" font-size="6" font-weight="bold" fill="#ffffff" text-anchor="middle" transform="rotate(-90 201.5 569)">225</text>
<line x1="269.5" y1="563" x2="269.5" y2="578" stroke="#ffffff" stroke-width="1"/>
<text x="266.5" y="569" font-size="6" font-weight="bold" fill="#ffffff" text-anchor="middle" transform="rotate(-90 266.5 569)">225</text>
<line x1="334.5" y1="563" x2="334.5" y2="578" stroke="#ffffff" stroke-width="1"/>
<text x="331.5" y="569" font-size="6" font-weight="bold" fill="#ffffff" text-anchor="middle" transform="rotate(-90 331.5 569)">35</text>
<line x1="399.5" y1="563" x2="399.5" y2="578" stroke="#ffffff" stroke-width="1"/>
<text x="396.5" y="569" font-size="6" font-weight="bold" fill="#ffffff" text-anchor="middle" transform="rotate(-90 396.5 569)">75</text>
<line x1="464.5" y1="563" x2="464.5" y2="578" stroke="#ffffff" stroke-width="1"/>
<text x="461.5" y="569" font-size="6" font-weight="bold" fill="#ffffff" text-anchor="middle" transform="rotate(-90 461.5 569)">225</text>
<line x1="529.5" y1="563" x2="529.5" y2="578" stroke="#ffffff" stroke-width="1"/>
<text x="526.5" y="569" font-size="6" font-weight="bold" fill="#ffffff" text-anchor="middle" transform="rotate(-90 526.5 569)">225</text>
<line x1="147.5" y1="608" x2="147.5" y2="630" stroke="#ffffff" stroke-width="1"/>
<text x="144.5" y="614" font-size="6" font-weight="bold" fill="#ffffff" text-anchor="middle" transform="rotate(-90 144.5 614)">125</text>
<line x1="587.5" y1="608" x2="587.5" y2="630" stroke="#ffffff" stroke-width="1"/>
<text x="584.5" y="614" font-size="6" font-weight="bold" fill="#ffffff" text-anchor="middle" transform="rotate(-90 584.5 614)">125</text>
<line x1="619.5" y1="560" x2="619.5" y2="580" stroke="#ffffff" stroke-width="1"/>
<text x="616.5" y="566" font-size="6" font-weight="bold" fill="#ffffff" text-anchor="middle" transform="rotate(-90 616.5 566)">345</text>
<line x1="237.5" y1="536" x2="237.5" y2="553" stroke="#ffffff" stroke-width="1"/>
<text x="234.5" y="542" font-size="6" font-weight="bold" fill="#ffffff" text-anchor="middle" transform="rotate(-90 234.5 542)">345</text>
<line x1="496.5" y1="536" x2="496.5" y2="553" stroke="#ffffff" stroke-width="1"/>
<text x="494.0" y="542" font-size="6" font-weight="bold" fill="#ffffff" text-anchor="middle" transform="rotate(-90 494.0 542)">345</text>
<line x1="711.5" y1="602" x2="711.5" y2="625" stroke="#ffffff" stroke-width="1"/>
<text x="708.5" y="608" font-size="6" font-weight="bold" fill="#ffffff" text-anchor="middle" transform="rotate(-90 708.5 608)">35</text>
<line x1="93" y1="415.5" x2="117" y2="415.5" stroke="#ffffff" stroke-width="1"/>
<text x="109" y="413.5" font-size="6" font-weight="bold" fill="#ffffff" text-anchor="middle"></text>
<line x1="93" y1="482.5" x2="117" y2="482.5" stroke="#ffffff" stroke-width="1"/>
<text x="109" y="480.5" font-size="6" font-weight="bold" fill="#ffffff" text-anchor="middle"></text>
<line x1="160" y1="547.5" x2="182" y2="547.5" stroke="#ffffff" stroke-width="1"/>
<text x="174" y="545.5" font-size="6" font-weight="bold" fill="#ffffff" text-anchor="middle">R15</text>
<line x1="551" y1="547.5" x2="585" y2="547.5" stroke="#ffffff" stroke-width="1"/>
<text x="577" y="545.5" font-size="6" font-weight="bold" fill="#ffffff" text-anchor="middle">R15</text>
<line x1="617" y1="482.5" x2="672" y2="482.5" stroke="#ffffff" stroke-width="1"/>
<text x="664" y="481.0" font-size="6" font-weight="bold" fill="#ffffff" text-anchor="middle">75</text>
<line x1="644" y1="534.5" x2="676" y2="534.5" stroke="#ffffff" stroke-width="1"/>
<text x="668" y="533.0" font-size="6" font-weight="bold" fill="#ffffff" text-anchor="middle">195</text>
<line x1="755" y1="449.5" x2="776" y2="449.5" stroke="#ffffff" stroke-width="1"/>
<text x="768" y="448.0" font-size="6" font-weight="bold" fill="#ffffff" text-anchor="middle">0</text>
<line x1="260" y1="378.5" x2="290" y2="378.5" stroke="#ffffff" stroke-width="1"/>
<text x="282" y="376.5" font-size="6" font-weight="bold" fill="#ffffff" text-anchor="middle">142</text>
<line x1="260" y1="520.5" x2="290" y2="520.5" stroke="#ffffff" stroke-width="1"/>
<text x="282" y="518.5" font-size="6" font-weight="bold" fill="#ffffff" text-anchor="middle">142</text>
<line x1="108" y1="583.5" x2="124" y2="583.5" stroke="#ffffff" stroke-width="1"/>
<text x="116" y="581.5" font-size="6" font-weight="bold" fill="#ffffff" text-anchor="middle">394</text>
<line x1="326" y1="287" x2="366" y2="317" stroke="#ffffff" stroke-width="1"/>
<line x1="366" y1="317" x2="392" y2="287" stroke="#ffffff" stroke-width="1"/>
<line x1="290" y1="323" x2="348" y2="360" stroke="#ffffff" stroke-width="1"/>
<text x="336" y="290" font-size="6" font-weight="bold" fill="#ffffff" text-anchor="middle" transform="rotate(38 336 290)">Ø30</text>
<text x="385" y="292" font-size="6" font-weight="bold" fill="#ffffff" text-anchor="middle" transform="rotate(-48 385 292)">Ø25</text>
<text x="302" y="328" font-size="6" font-weight="bold" fill="#ffffff" text-anchor="middle" transform="rotate(32 302 328)">12-Ø30</text>
<path d="M357,306 L377,330 M377,306 L357,330" stroke="#ffffff" stroke-width="1.1"/>
<path d="M780,449 h10 M785,449 v24 M782,462 l3,-10 l3,10z" stroke="#ffffff" stroke-width="2" fill="none"/>
<text x="793" y="474" font-size="7" font-weight="bold" fill="#ffffff" text-anchor="middle">A</text>
<text x="813" y="458" font-size="7" font-weight="bold" fill="#ffffff" text-anchor="middle" transform="rotate(-90 813 458)">525</text>
<path d="M349.5,656 V665 M384.500,656 V665 M349,661.500 H384 M393.500,643 V665 M384,661.500 H393" stroke="#ffffff" stroke-width="1" fill="none"/>
<text x="367" y="660" font-size="6" font-weight="bold" fill="#ffffff" text-anchor="middle">60</text>
<path d="M348,655.500 H386" stroke="#6c6cf2" stroke-width="3.5" fill="none"/>
<path d="M437,692 h12 M449,688 h8 v7 h-8z M457,692 h5 M462,687 v9" stroke="#ffffff" stroke-width="1.8" fill="none"/>
<line x1="667.5" y1="581" x2="667.5" y2="602" stroke="#ffffff" stroke-width="1"/>
<text x="664" y="594.5" font-size="6" font-weight="bold" fill="#ffffff" text-anchor="middle" transform="rotate(-90 664 594.5)">36</text>
<line x1="689.5" y1="500" x2="689.5" y2="512" stroke="#ffffff" stroke-width="1"/>
<text x="686" y="509.0" font-size="6" font-weight="bold" fill="#ffffff" text-anchor="middle" transform="rotate(-90 686 509.0)">41</text>
<text x="247" y="441" font-size="6" font-weight="bold" fill="#ffffff" text-anchor="middle">4-M6</text>
<path d="M255,441 Q265,443 271,459" stroke="#ffffff" stroke-width="1" fill="none"/>
<text x="283" y="458" font-size="6" font-weight="bold" fill="#ffffff" text-anchor="middle">16</text>
<line x1="271.5" y1="466" x2="271.5" y2="480" stroke="#ffffff" stroke-width="1"/>
<text x="268.5" y="472" font-size="6" font-weight="bold" fill="#ffffff" text-anchor="middle" transform="rotate(-90 268.5 472)">R76</text>
<circle cx="271" cy="460" r="2.5" fill="#e02020"/><circle cx="461" cy="460" r="2.5" fill="#e02020"/>
<path d="M461,459 L476,447 H486" stroke="#ffffff" stroke-width="1" fill="none"/>
<text x="487" y="446" font-size="6" font-weight="bold" fill="#ffffff" text-anchor="start">2-Ø8</text>
<text x="445" y="459" font-size="6" font-weight="bold" fill="#ffffff" text-anchor="middle">16</text>
<line x1="461.5" y1="466" x2="461.5" y2="480" stroke="#ffffff" stroke-width="1"/>
<text x="458.5" y="472" font-size="6" font-weight="bold" fill="#ffffff" text-anchor="middle" transform="rotate(-90 458.5 472)">R76</text>
<text x="325" y="396" font-size="6" font-weight="bold" fill="#ffffff" text-anchor="middle">12-Ø30×2 ▽ 20.7</text>
<path d="M343,394 H350 L366,450" stroke="#ffffff" stroke-width="1" fill="none"/>
<text x="372" y="397" font-size="9" font-weight="normal" fill="#d07020" text-anchor="middle">YC</text>
<path d="M367,409 V441" stroke="#30e040" stroke-width="2" fill="none"/>
<path d="M367,441 H487" stroke="#20e0f0" stroke-width="2.5" fill="none"/>
<path d="M460.5,451 V441.5 H471 M523,442 H532 V433" stroke="#ffffff" stroke-width="2" fill="none"/>
<path d="M360,449 q7,-8 14,0 q-7,8 -14,0z" fill="#f4e8b0"/>
<text x="385" y="457" font-size="5" font-weight="bold" fill="#c04040" text-anchor="middle">WCS ORIGIN</text>
<text x="425" y="452" font-size="8" font-weight="normal" fill="#d07020" text-anchor="middle">XC</text>
<text x="194" y="431" font-size="6" font-weight="bold" fill="#ffffff" text-anchor="middle">60</text>
<text x="340" y="303" font-size="6" font-weight="bold" fill="#ffffff" text-anchor="middle">56</text>
<path d="M155.5,432.5 V473.5 M155.5,432.5 H163 M155.5,473.5 H163" stroke="#ffffff" stroke-width="1" fill="none"/>
<text x="153" y="456" font-size="6" font-weight="bold" fill="#ffffff" text-anchor="middle" transform="rotate(-90 153 456)">95</text>
<line x1="186" y1="433.5" x2="202" y2="433.5" stroke="#ffffff" stroke-width="1"/>
<path d="M178,491 H196 M192,488 V502" stroke="#ffffff" stroke-width="1" fill="none"/>
<text x="203" y="489" font-size="6" font-weight="bold" fill="#ffffff" text-anchor="middle">16</text>
<path d="M487,312 V322" stroke="#ffffff" stroke-width="1" fill="none"/>
<line x1="297" y1="437.5" x2="309" y2="437.5" stroke="#ffffff" stroke-width="1"/>
<text x="303" y="435.5" font-size="6" font-weight="bold" fill="#ffffff" text-anchor="middle">24</text>
<line x1="294.5" y1="386" x2="294.5" y2="400" stroke="#ffffff" stroke-width="1"/>
<text x="291.5" y="392" font-size="6" font-weight="bold" fill="#ffffff" text-anchor="middle" transform="rotate(-90 291.5 392)">145</text>
</svg><svg class="a" style="left:0;top:0" width="1024" height="768" viewBox="0 0 1024 768" font-family="Liberation Sans, Noto Sans CJK SC, sans-serif">
<defs>
<radialGradient id="globe" cx="0.4" cy="0.35" r="0.7"><stop offset="0" stop-color="#7fd0ff"/><stop offset="0.5" stop-color="#2a7fe0"/><stop offset="1" stop-color="#0b3fa0"/></radialGradient>
<linearGradient id="pg" x1="0" y1="0" x2="1" y2="1"><stop offset="0" stop-color="#ffffff"/><stop offset="1" stop-color="#c9cff2"/></linearGradient>
<linearGradient id="fold" x1="0" y1="0" x2="0" y2="1"><stop offset="0" stop-color="#fbf3a8"/><stop offset="1" stop-color="#e8c83a"/></linearGradient>
<linearGradient id="blu" x1="0" y1="0" x2="1" y2="1"><stop offset="0" stop-color="#f4f6ff"/><stop offset="1" stop-color="#9fb0ea"/></linearGradient>
<linearGradient id="cyl" x1="0" y1="0" x2="1" y2="0"><stop offset="0" stop-color="#8fb0f0"/><stop offset="0.5" stop-color="#dfe8ff"/><stop offset="1" stop-color="#4a6ad0"/></linearGradient>
<linearGradient id="tile" x1="0" y1="0" x2="0" y2="1"><stop offset="0" stop-color="#f6f7fd"/><stop offset="1" stop-color="#c3caea"/></linearGradient>
<radialGradient id="orb" cx="0.5" cy="0.35" r="0.75"><stop offset="0" stop-color="#8fd0ff"/><stop offset="0.45" stop-color="#2e6fd0"/><stop offset="1" stop-color="#0a2a78"/></radialGradient>
<pattern id="hatch" width="4" height="4" patternUnits="userSpaceOnUse" patternTransform="rotate(-45)"><rect width="4" height="4" fill="#fff"/><rect width="4" height="1.100" fill="#4a4aa0"/></pattern>
</defs>
<g transform="translate(10.5,12.5) scale(0.75)"><circle cx="0" cy="0.5" r="9.5" fill="url(#globe)"/><path d="M-2,-3 q4,-2 6,2 q1,4 -2,7 q-4,1 -5,-3 q-1,-3 1,-6z" fill="#30a040" opacity="0.9"/><path d="M-7,4 q2,3 4,5 q-3,0 -5,-3z" fill="#30a040" opacity="0.8"/><ellipse cx="0.500" cy="1" rx="13" ry="4.200" transform="rotate(-32 0.500 1)" fill="none" stroke="#e8c020" stroke-width="2"/><path d="M-8,-2 a9.500,9.500 0 0 1 16,-3" fill="none" stroke="url(#globe)" stroke-width="3" opacity="0"/><path d="M-9,-11 L2.500,-11 L-1.500,-0.500Z" fill="#e02028" stroke="#a01018" stroke-width="0.6"/><path d="M-9,-11 L-3,-9 L-1.500,-0.500Z" fill="#ff6060" opacity="0.6"/></g>
<rect x="934" y="6" width="11" height="4" fill="#e8eef0" stroke="#3c3e50" stroke-width="1.2"/>
<path d="M960,3 h9 v8 h-2 M958,5 h8 v8 h-8z M961,7.500 h3 v3 h-3z" fill="none" stroke="#3c3e50" stroke-width="1.3"/>
<path d="M994,2.500 L1003,10.500 M1003,2.500 L994,10.500" stroke="#3c3e50" stroke-width="4" stroke-linecap="round"/><path d="M994,2.500 L1003,10.500 M1003,2.500 L994,10.500" stroke="#f3e6f0" stroke-width="1.600" stroke-linecap="round"/>
<g transform="translate(14,37)"><path d="M-3,-6 l5,-2 l4,6 l-5,3z" fill="#fff" stroke="#5060c0" stroke-width="1"/><path d="M-8,4 q0,-6 5,-8 l2,2 q-5,2 -5,7z" fill="#111"/><path d="M-5,-1 l9,5 l-1,2 l-9,-5z" fill="#b8c860" stroke="#8a9a40" stroke-width="0.5"/></g>
<path d="M4,28 v18" stroke="#fff" stroke-width="1"/><path d="M5,28 v18" stroke="#a4abcd" stroke-width="1"/>
<path d="M976,41 h6" stroke="#333" stroke-width="2"/><path d="M994,33.500 h6 v6 M991.500,36 h6 v6 h-6z" fill="none" stroke="#333" stroke-width="1.300"/><path d="M1009,33 l7,7 M1016,33 l-7,7" stroke="#333" stroke-width="1.900"/>
<path d="M1020.5,26 v22" stroke="#c8cad8"/>
<path d="M4,54 v26" stroke="#fff" stroke-width="1"/><path d="M5,54 v26" stroke="#a4abcd" stroke-width="1"/>
<path d="M390,54 v26" stroke="#fff" stroke-width="1"/><path d="M391,54 v26" stroke="#a4abcd" stroke-width="1"/>
<path d="M567,54 v26" stroke="#fff" stroke-width="1"/><path d="M568,54 v26" stroke="#a4abcd" stroke-width="1"/>
<g transform="translate(22,67) scale(1.0)"><circle cx="0" cy="0.5" r="9.5" fill="url(#globe)"/><path d="M-2,-3 q4,-2 6,2 q1,4 -2,7 q-4,1 -5,-3 q-1,-3 1,-6z" fill="#30a040" opacity="0.9"/><path d="M-7,4 q2,3 4,5 q-3,0 -5,-3z" fill="#30a040" opacity="0.8"/><ellipse cx="0.500" cy="1" rx="13" ry="4.200" transform="rotate(-32 0.500 1)" fill="none" stroke="#e8c020" stroke-width="2"/><path d="M-8,-2 a9.500,9.500 0 0 1 16,-3" fill="none" stroke="url(#globe)" stroke-width="3" opacity="0"/><path d="M-9,-11 L2.500,-11 L-1.500,-0.500Z" fill="#e02028" stroke="#a01018" stroke-width="0.6"/><path d="M-9,-11 L-3,-9 L-1.500,-0.500Z" fill="#ff6060" opacity="0.6"/></g>
<text x="38" y="71.500" font-size="12" fill="#000">起始</text>
<path d="M65.5,65.0 h6 l-3,3.5z" fill="#000"/>
<g transform="translate(90,67)"><path d="M-8.500,-10.500 h11 l6.500,6.500 v14.500 h-17.500z" fill="url(#pg)" stroke="#9aa4dc" stroke-width="1.200"/><path d="M2.500,-10.500 v6.500 h6.500z" fill="#b8c2ee" stroke="#9aa4dc" stroke-width="1"/></g>
<g transform="translate(121,67)"><path d="M-11,-6 l3,-3 h6 l2,2 h8 v4z" fill="#e8c84a" stroke="#b89820" stroke-width="0.8"/><path d="M-11,10 V-4 h19 l-1,14z" fill="url(#fold)" stroke="#c0a020" stroke-width="0.8"/><path d="M-11,10 l4,-11 h20 l-5,11z" fill="#f4e070" stroke="#c0a020" stroke-width="0.8"/><path d="M-1,-7 q6,-5 10,0 l2.500,-2 l0.500,8 l-8,-1 l2.500,-2.500 q-3,-3.500 -7.500,-2.500z" fill="#40b040" stroke="#208020" stroke-width="0.7"/></g>
<g transform="translate(152,67)"><rect x="-9" y="-9.500" width="19" height="19" fill="#3a4ab0" stroke="#1c2470" stroke-width="1"/><rect x="-5.500" y="-8.500" width="12" height="8.500" fill="#fff"/><rect x="-5" y="2.500" width="11" height="7" fill="#151530"/><rect x="-1" y="3.500" width="3" height="5" fill="#c8d0f0"/><rect x="8" y="-8" width="1.5" height="2" fill="#fff"/></g>
<g transform="translate(187,67)"><path d="M-2,2 L7,-8 M-3,-1 L9,-1.500" stroke="#9aa0b4" stroke-width="2.600" stroke-linecap="round"/><circle cx="-6" cy="-1" r="2.800" fill="none" stroke="#9aa0b4" stroke-width="1.800"/><circle cx="-2.500" cy="6" r="2.800" fill="none" stroke="#9aa0b4" stroke-width="1.800"/></g>
<g transform="translate(219,67)"><path d="M-9,-9 h8 l3,3 v9 h-11z" fill="#b9bdcc" stroke="#9aa0b4" stroke-width="1"/><path d="M-2,-2 h8 l3,3 v10 h-11z" fill="#b9bdcc" stroke="#9aa0b4" stroke-width="1"/><path d="M0,3 h7 M0,5.500 h7 M0,8 h7" stroke="#9aa0b4" stroke-width="0.800"/></g>
<g transform="translate(251,67)"><rect x="-10" y="-8" width="15" height="17" rx="1.500" fill="#b9bdcc" stroke="#9aa0b4" stroke-width="1.200"/><rect x="-6" y="-10.500" width="7" height="4" fill="#9aa0b4"/><rect x="-4" y="-3" width="14" height="14" fill="#b9bdcc" stroke="#9aa0b4" stroke-width="1"/><path d="M-2,1 h10 M-2,4 h10 M-2,7 h10" stroke="#9aa0b4" stroke-width="0.800"/></g>
<g transform="translate(282,67)"><path d="M-7,-8 Q0,0 7,8.500 M7,-8.500 Q0,0 -7.500,8" stroke="#1a1a1a" stroke-width="2.600" stroke-linecap="round" fill="none"/></g>
<g transform="translate(318,67)"><path d="M-4,-1 C-1,-9 9,-8 9,1 C9,5 7,7 5.500,8.500" fill="none" stroke="#151a50" stroke-width="3"/><path d="M-9.500,-1 L0.500,-4.500 L-1.500,5.500Z" fill="#151a50"/></g>
<g transform="translate(355,67)"><rect x="-10" y="-11" width="12" height="12" fill="#fff" stroke="#303050" stroke-width="1"/><text x="-4" y="-1" font-family="Liberation Serif" font-weight="bold" font-size="12" text-anchor="middle" fill="#000">i</text><path d="M-4,5 L3.500,-2 L11,5 L3.500,12Z" fill="#3858c8" stroke="#1c2c80" stroke-width="1"/><path d="M-0.500,5 L3.500,1 L5.500,3 L5.500,9Z" fill="#fff"/></g>
<path d="M374,75.0 h6 l-3,3.5z" fill="#000"/>
<g transform="translate(408,67)"><path d="M-2,-10 h8 l4,4 v11 h-12z" fill="#fff" stroke="#9a80c0" stroke-width="1"/><path d="M0,-5 h8 M0,-2 h8 M0,1 h8" stroke="#e07080" stroke-width="1.500"/><g transform="translate(-4,4) scale(1.0)" fill="none" stroke-linecap="round"><path d="M0.300,-0.300 L-5.200,5.200" stroke="#c8901c" stroke-width="5.400"/><path d="M6.390,-2.700 A3.400,3.400 0 1 1 2.700,-6.390" stroke="#c8901c" stroke-width="4.200" stroke-linecap="butt"/><path d="M0.300,-0.300 L-5.200,5.200" stroke="#fae060" stroke-width="3.800"/><path d="M6.390,-2.700 A3.400,3.400 0 1 1 2.700,-6.390" stroke="#fae060" stroke-width="2.600" stroke-linecap="butt"/><circle cx="-5.200" cy="5.200" r="0.900" fill="#fff" stroke="none"/></g></g>
<g transform="translate(439,67)"><path d="M-6,-11 C3,-10 7,-3 6,1" fill="none" stroke="#111" stroke-width="1.800"/><path d="M-11,-1 H11" stroke="#111" stroke-width="1.500"/><path d="M1,-7 L10,4 M4,-7 Q9,-3 5,3" stroke="#e02030" stroke-width="1.500" fill="none"/><path d="M-10,10 Q-4,3 6,2" fill="none" stroke="#8890b0" stroke-width="1.200" stroke-dasharray="1.500 1.500"/></g>
<g transform="translate(471,67)"><path d="M-12,-1 H12 M0,-11 V12" stroke="#111" stroke-width="1.400"/><path d="M-4,-9 L9,3" stroke="#e02030" stroke-width="1.300"/></g>
<g transform="translate(501,67)"><path d="M-12,10 C-2,10 3,4 3,-9" fill="none" stroke="#111" stroke-width="1.600"/><path d="M-9,9 C0,7 4,2 5,-9" fill="none" stroke="#e02030" stroke-width="2"/><path d="M8,-8 L8,5 M11.500,-7 V5" stroke="#e04040" stroke-width="1.500"/><path d="M8,-10 l-2.500,4 h5z M11.500,7 l-2.500,-4 h5z" fill="#e04040"/></g>
<g transform="translate(535,67)"><path d="M-11,-4 C-6,-10 -2,-2 3,-6 S9,-10 11,-9" fill="none" stroke="#111" stroke-width="1.600"/><path d="M-11,11 C-5,3 5,2 12,8" fill="none" stroke="#e02030" stroke-width="1.800"/><path d="M0,-3 V3" stroke="#e07020" stroke-width="2.400"/><path d="M-3.500,1.500 L0,6.500 L3.500,1.500Z" fill="#e07020"/></g>
<path d="M551,75.0 h6 l-3,3.5z" fill="#000"/>
<g transform="translate(587,67)"><path d="M-8,-7 L9,-1 V11 L-8,4Z" fill="#fff" stroke="#50508a" stroke-width="0.900"/><path d="M-8,-7 L9,-1" stroke="#5038c8" stroke-width="2.200"/><path d="M-8,-3.300 L9,2.700 M-8,0.400 L9,6.400 M-3.800,-5.500 V5.700 M0.500,-4 V7.200 M4.800,-2.500 V8.800" stroke="#50508a" stroke-width="0.800"/><polygon points="-3.5,-8.0 -6.3,-7.3 -4.8,-4.8 -7.3,-6.3 -8.0,-3.5 -8.7,-6.3 -11.2,-4.8 -9.7,-7.3 -12.5,-8.0 -9.7,-8.7 -11.2,-11.2 -8.7,-9.7 -8.0,-12.5 -7.3,-9.7 -4.8,-11.2 -6.3,-8.7" fill="#e8f040" stroke="#9ab010" stroke-width="0.4"/></g>
<g transform="translate(618,67)"><rect x="-8" y="-7" width="18" height="17" fill="#fff" stroke="#40407a" stroke-width="1"/><path d="M-8,-3 h18 M-8,1 h18 M-8,5 h18 M-3.500,-7 v17 M1,-7 v17 M5.500,-7 v17" stroke="#40407a" stroke-width="0.800"/><rect x="-8" y="5" width="18" height="5" fill="#88a8d8" opacity="0.85"/><polygon points="-3.5,-8.0 -6.3,-7.3 -4.8,-4.8 -7.3,-6.3 -8.0,-3.5 -8.7,-6.3 -11.2,-4.8 -9.7,-7.3 -12.5,-8.0 -9.7,-8.7 -11.2,-11.2 -8.7,-9.7 -8.0,-12.5 -7.3,-9.7 -4.8,-11.2 -6.3,-8.7" fill="#e8f040" stroke="#9ab010" stroke-width="0.4"/></g>
<g transform="translate(648,67)"><path d="M-8,-7 L9,-1 V11 L-8,4Z" fill="#fff" stroke="#50508a" stroke-width="0.900"/><path d="M-8,-7 L9,-1" stroke="#5038c8" stroke-width="2.200"/><path d="M-8,-3.300 L9,2.700 M-8,0.400 L9,6.400 M-3.800,-5.500 V5.700 M0.500,-4 V7.200 M4.800,-2.500 V8.800" stroke="#50508a" stroke-width="0.800"/><path d="M-2,9 h14 l-3,3 h-11z" fill="#9098b0"/><g transform="translate(-2,3) scale(1.0)" fill="none" stroke-linecap="round"><path d="M0.300,-0.300 L-5.200,5.200" stroke="#c8901c" stroke-width="5.400"/><path d="M6.390,-2.700 A3.400,3.400 0 1 1 2.700,-6.390" stroke="#c8901c" stroke-width="4.200" stroke-linecap="butt"/><path d="M0.300,-0.300 L-5.200,5.200" stroke="#fae060" stroke-width="3.800"/><path d="M6.390,-2.700 A3.400,3.400 0 1 1 2.700,-6.390" stroke="#fae060" stroke-width="2.600" stroke-linecap="butt"/><circle cx="-5.200" cy="5.200" r="0.900" fill="#fff" stroke="none"/></g></g>
<g transform="translate(685,67)"><circle cx="-4" cy="4" r="7" fill="#fff" stroke="#903030" stroke-width="1.200"/><text x="-4" y="8.500" font-size="12" font-weight="bold" text-anchor="middle" fill="#101060">7</text><path d="M2,-2 L8,-6 L6.500,-3.500 L12,-8 L7,-8.500 L10,-12 L4,-7 L6.500,-6.500Z" fill="#f0e020" stroke="#a09010" stroke-width="0.600"/></g>
<path d="M703,75.0 h6 l-3,3.5z" fill="#000"/>
<path d="M4,88 v26" stroke="#fff" stroke-width="1"/><path d="M5,88 v26" stroke="#a4abcd" stroke-width="1"/>
<path d="M435,88 v26" stroke="#fff" stroke-width="1"/><path d="M436,88 v26" stroke="#a4abcd" stroke-width="1"/>
<g transform="translate(22,101)"><path d="M-7.500,7.500 L9.500,-8.500" stroke="#111" stroke-width="1.500"/><circle cx="-7.5" cy="7.5" r="2.2" fill="#e02030"/><circle cx="9.5" cy="-8.5" r="2.2" fill="#e02030"/></g>
<g transform="translate(53,101)"><path d="M-7,-8 C3,-8 9,-2 9.500,7" fill="none" stroke="#111" stroke-width="1.600"/><circle cx="-7" cy="-8" r="2.2" fill="#e02030"/><circle cx="5" cy="-4.5" r="2.2" fill="#e02030"/><circle cx="9.5" cy="7" r="2.2" fill="#e02030"/></g>
<g transform="translate(84,101)"><circle cx="-4" cy="-3" r="6.500" fill="none" stroke="#3a2a90" stroke-width="1.300"/><circle cx="-4" cy="-3" r="1.3" fill="#e02030"/><path d="M-8.500,5.500 L5.500,9.500" stroke="#5030a0" stroke-width="1.500"/><circle cx="-8.5" cy="5.5" r="2" fill="#e02030"/><circle cx="5.5" cy="9.5" r="2" fill="#e02030"/><ellipse cx="7" cy="-8" rx="2.800" ry="3.800" fill="none" stroke="#b8a020" stroke-width="1.600"/><ellipse cx="9" cy="-2" rx="2.800" ry="3.800" fill="none" stroke="#b8a020" stroke-width="1.600"/></g>
<g transform="translate(116,101)"><circle cx="-4" cy="-3.500" r="6.500" fill="none" stroke="#111" stroke-width="1.300"/><circle cx="-4" cy="-3.500" r="0.700" fill="#a03060"/><path d="M-3,9 L8.500,-3" stroke="#111" stroke-width="1.500"/><circle cx="-3" cy="9" r="2" fill="#e02030"/><circle cx="8.5" cy="-3" r="2" fill="#e02030"/></g>
<g transform="translate(147,101)"><path d="M-11,5 L-6,0 L1,3 L8,0 M-6,0 L-6,-7 M1,3 L1,10" stroke="#9898a8" stroke-width="1.600" fill="none"/><path d="M-6,0 Q-2,4 1,3 Q5,1 8,0" stroke="#e02030" stroke-width="1.500" fill="none"/><circle cx="-6" cy="0" r="2" fill="#e02030"/><circle cx="1" cy="3" r="2" fill="#e02030"/><circle cx="8" cy="0" r="1.8" fill="#e02030"/><circle cx="-6" cy="-7" r="1.6" fill="#9898a8"/><circle cx="-11" cy="5" r="1.6" fill="#9898a8"/><circle cx="1" cy="10" r="1.6" fill="#9898a8"/></g>
<g transform="translate(178,101)"><path d="M-10,-9 C-8,2 -1,-3 1,2 S8,6 10,10" fill="none" stroke="#111" stroke-width="1.600"/><circle cx="-10" cy="-9" r="1.6" fill="#888"/><circle cx="-4" cy="0" r="1.6" fill="#888"/><circle cx="3" cy="-2" r="1.6" fill="#888"/><circle cx="2" cy="5" r="1.6" fill="#888"/><circle cx="10" cy="10" r="1.6" fill="#888"/><circle cx="-10" cy="-9" r="1.2" fill="#c03040"/></g>
<text x="209" y="109.500" font-family="Liberation Serif" font-size="27" font-weight="bold" text-anchor="middle" fill="#111">A</text>
<g transform="translate(246,101)"><path d="M-10,9 V-3 L-4,-9 H3 V-6 C9,-8 12,-2 9,3 C7,7 3,9 -2,9Z" fill="#fff" stroke="#111" stroke-width="1.500" stroke-linejoin="round"/><path d="M-6.500,5.500 V-1.500 L-2.500,-5.500 H0 V-2 C6,-4.500 8,0 6,3 C4,5.500 1,5.500 -6.500,5.500Z" fill="none" stroke="#e02030" stroke-width="1.500"/></g>
<g transform="translate(277,101)"><path d="M-9,-8 C-11,-4 -7,-2 -4,-4 M-3,-6 C2,-9 6,-5 10,-7" fill="none" stroke="#111" stroke-width="1.500" stroke-dasharray="5 2"/><path d="M-10,9 C-12,4 -6,2 -3,5 S4,9 10,5" fill="none" stroke="#111" stroke-width="1.600"/><path d="M1,-3 V2" stroke="#e05020" stroke-width="2.400"/><path d="M-2.500,1 L1,6 L4.500,1Z" fill="#e05020"/><rect x="-2" y="-4" width="6" height="2" fill="#e09090"/></g>
<g transform="translate(308,101)"><path d="M-8,-10 H8" stroke="#111" stroke-width="2.200"/><path d="M0,-8 V-3" stroke="#e05020" stroke-width="2.400"/><path d="M-3.500,-4 L0,1 L3.500,-4Z" fill="#e05020"/><path d="M-11,6 C-6,-2 2,4 10,-2 L12,5 C4,11 -4,5 -9,12Z" fill="#5080d8" stroke="#2848a0" stroke-width="0.800"/><path d="M-8,6 C-3,2 3,6 9,2" fill="none" stroke="#e02030" stroke-width="1.600"/><path d="M-11,6 C-6,-2 2,4 10,-2" fill="none" stroke="#a0c0f8" stroke-width="1.500"/></g>
<g transform="translate(340,101)"><path d="M-10,-8 L-2,-10 V7 L-10,9Z" fill="#fdf8e0" stroke="#c8a030" stroke-width="1"/><path d="M-4,-5 L5,-9 V9 L-4,12Z" fill="#f8e8a0" stroke="#d8a020" stroke-width="1"/><path d="M3,-6 L11,-8 V8 L3,11Z" fill="#fdf4d0" stroke="#d0a028" stroke-width="1"/><rect x="-2" y="2" width="5" height="6" fill="none" stroke="#e03030" stroke-width="1.200"/><circle cx="1" cy="-1" r="2" fill="none" stroke="#e03030" stroke-width="1"/></g>
<g transform="translate(370,101)"><path d="M2,-10 L7,6 L-2,4Z" fill="#f4e060" stroke="#c8b020" stroke-width="0.800"/><path d="M-9,1 L1,-2 L10,1 V8 L0,11 L-9,8Z M-9,1 L0,4 L10,1 M0,4 V11" fill="none" stroke="#111" stroke-width="1.300"/><path d="M0,4 L10,1 V8 L0,11Z" fill="#f0d840" opacity="0.7"/></g>
<g transform="translate(401,101)"><path d="M-11,-5 a4.500,2.200 0 0 1 9,0 V8 a4.500,2.200 0 0 1 -9,0Z" fill="url(#cyl)" stroke="#2840a0" stroke-width="1"/><ellipse cx="-6.500" cy="-5" rx="4.500" ry="2.200" fill="#c8d8ff" stroke="#2840a0" stroke-width="1"/><path d="M-1,2 H5" stroke="#e05020" stroke-width="2.400"/><path d="M4,-1.500 L9,2 L4,5.500Z" fill="#e05020"/><path d="M8,-9 C13,-4 13,6 8,11" fill="none" stroke="#e02030" stroke-width="1.600"/></g>
<path d="M419,109.0 h6 l-3,3.5z" fill="#000"/>
<g transform="translate(454,101)"><rect x="-11" y="-9" width="22" height="19" fill="url(#blu)" stroke="#2038a8" stroke-width="1.200"/><rect x="-11" y="-9" width="22" height="3" fill="#2848c0"/><path d="M-4,-3 L4,5 M4,-3 L-4,5" stroke="#e87820" stroke-width="2.600"/><path d="M-6,-5 h4 l-4,4z M6,-5 h-4 l4,4z M-6,7 h4 l-4,-4z M6,7 h-4 l4,-4z" fill="#e87820"/></g>
<g transform="translate(485,101)"><rect x="-11" y="-9" width="22" height="19" fill="#a4aac4" stroke="#9096b4" stroke-width="1"/><path d="M-8,-6 L8,7 M8,-6 L-8,7" stroke="#9aa0bc" stroke-width="2"/></g>
<g transform="translate(516,101)"><rect x="-11" y="-9" width="22" height="19" fill="url(#blu)" stroke="#2038a8" stroke-width="1.200"/><rect x="-11" y="-9" width="22" height="3" fill="#2848c0"/><circle cx="0" cy="2" r="6" fill="#f4f8ff" stroke="#506080" stroke-width="1.300"/><path d="M4.500,6.500 L10,12" stroke="#a09050" stroke-width="2.600"/><circle cx="-11" cy="10" r="1.8" fill="#e02030"/><circle cx="11" cy="-8" r="1.8" fill="#e02030"/></g>
<g transform="translate(546,101)"><circle cx="-3" cy="-4" r="7.500" fill="#eef4ff" stroke="#404a60" stroke-width="1.600"/><path d="M-7,-5 h8 M-3,-9 v7 M-7,0 h8" stroke="#202a70" stroke-width="1.600"/><path d="M2.500,2 L10,10" stroke="#808890" stroke-width="3"/></g>
<g transform="translate(578,101)"><rect x="-12" y="-9" width="20" height="16" fill="url(#blu)" stroke="#8090d0" stroke-width="1.200"/><path d="M-1,1 l2,-4 l2,1 l1,-2 l2,1 l1,-1 l2,2 l1,7 l-4,6 l-5,-3 l-4,-6 l2,-1z" fill="#f4d8a0" stroke="#c09850" stroke-width="0.800"/></g>
<path d="M596,109.0 h6 l-3,3.5z" fill="#000"/>
<path d="M11,122 v26" stroke="#fff" stroke-width="1"/><path d="M12,122 v26" stroke="#a4abcd" stroke-width="1"/>
<path d="M377,122 v26" stroke="#fff" stroke-width="1"/><path d="M378,122 v26" stroke="#a4abcd" stroke-width="1"/>
<path d="M832,122 v26" stroke="#fff" stroke-width="1"/><path d="M833,122 v26" stroke="#a4abcd" stroke-width="1"/>
<g transform="translate(30,135)"><rect x="-8" y="-11" width="17" height="5" fill="#b9bdcc" stroke="#9aa0b4"/><path d="M-10,-8 v10 h5 M3,6 v5 h4" stroke="#9aa0b4" fill="none"/><rect x="-5" y="-4" width="13" height="10" fill="#9aa0b4"/><rect x="5" y="8" width="5" height="5" fill="#b9bdcc" stroke="#9aa0b4"/></g>
<g transform="translate(60,135)"><rect x="-10" y="-8" width="19" height="18" fill="#fff" stroke="#303080" stroke-width="1.300"/><text x="-1" y="8.500" font-family="Liberation Serif" font-size="19" font-weight="bold" text-anchor="middle" fill="#111">A</text><g transform="translate(6,-6) scale(0.9)"><path d="M-5,5 L-3.5,0.500 L4,-7 L7,-4 L-0.500,3.500Z" fill="#f0c040" stroke="#a07818" stroke-width="0.8"/><path d="M4,-7 L5.500,-8.500 L8.500,-5.500 L7,-4Z" fill="#e04050"/><path d="M-5,5 L-4.200,2.500 L-2.500,4.200Z" fill="#222"/></g></g>
<g transform="translate(92,135)"><rect x="-5" y="1" width="16" height="5" fill="#fff" stroke="#111" stroke-width="1.200"/><path d="M-5,3.500 H-9 V10" stroke="#111" stroke-width="1.300" fill="none"/><path d="M-11.500,7 L-9,12 L-6.500,7Z" fill="#111"/><g transform="translate(3,-4) scale(1.0)"><path d="M-5,5 L-3.5,0.500 L4,-7 L7,-4 L-0.500,3.500Z" fill="#f0c040" stroke="#a07818" stroke-width="0.8"/><path d="M4,-7 L5.500,-8.500 L8.500,-5.500 L7,-4Z" fill="#e04050"/><path d="M-5,5 L-4.200,2.500 L-2.500,4.200Z" fill="#222"/></g></g>
<g transform="translate(123,135)"><circle cx="-3" cy="-5" r="4.500" fill="none" stroke="#d02030" stroke-width="1.500"/><path d="M-3,-12 V2 M-10,-5 H4" stroke="#111" stroke-width="1.200"/><rect x="0" y="2" width="11" height="9" fill="#e4e8f8" stroke="#303060" stroke-width="1.200"/><path d="M2,6.500 H9" stroke="#d02030" stroke-width="1.200" stroke-dasharray="2 1.500"/></g>
<g transform="translate(155,135)"><circle cx="5" cy="-4" r="7" fill="#fff" stroke="#202050" stroke-width="1.200"/><text x="5" y="0.500" font-size="12" font-weight="bold" text-anchor="middle" fill="#101050">7</text><path d="M0,1 L-8,9" stroke="#111" stroke-width="1.300"/><path d="M-10.500,11.500 L-8.500,5.500 L-4.500,9.500Z" fill="#111"/></g>
<g transform="translate(186,135)"><path d="M-4,-8 H6 V8 H-8 V0 H-4Z" fill="#b9bdcc" stroke="#9aa0b4" stroke-width="1"/><path d="M-11,-10 V10 M9,-10 V10 M-10,11 H9" stroke="#9aa0b4" stroke-width="1" fill="none"/></g>
<g transform="translate(217,137)"><path d="M-9,-5 L9,8 V-5 L-9,8Z" fill="#f8c040" stroke="#d89018" stroke-width="1.200" stroke-linejoin="round"/><polygon points="-4.5,-9.0 -7.3,-8.3 -5.8,-5.8 -8.3,-7.3 -9.0,-4.5 -9.7,-7.3 -12.2,-5.8 -10.7,-8.3 -13.5,-9.0 -10.7,-9.7 -12.2,-12.2 -9.7,-10.7 -9.0,-13.5 -8.3,-10.7 -5.8,-12.2 -7.3,-9.7" fill="#e8f040" stroke="#9ab010" stroke-width="0.4"/></g>
<g transform="translate(247,137)"><path d="M-9,-5 L9,8 V-5 L-9,8Z" fill="#f8c040" stroke="#d89018" stroke-width="1.200" stroke-linejoin="round"/><g transform="translate(3,-8) scale(0.95)"><path d="M-7,2 L-1,-3 L5,-5 L7,-1 L1,4 L-5,5Z" fill="#f2c98a" stroke="#c08a50" stroke-width="0.8"/><path d="M3,-6 L8,-8 L10,-3 L6,-1Z" fill="#3030a0" stroke="#202070" stroke-width="0.6"/></g></g>
<g transform="translate(278,135)"><rect x="-11" y="-9" width="22" height="19" fill="#959bb8" stroke="#8a90ae" stroke-width="1"/><path d="M-6,6 Q0,-4 8,-5" stroke="#a4aac4" fill="none" stroke-width="1.500"/></g>
<g transform="translate(310,135)"><path d="M-7,-12 V9" stroke="#303050" stroke-width="1.300"/><path d="M-11,9.500 H11" stroke="#303050" stroke-width="2"/><path d="M-11,11.500 H11" stroke="#fff" stroke-width="1.500"/><path d="M-4,6 L1,-5 H10 L3,-8" fill="none" stroke="#d02030" stroke-width="1.300"/><path d="M1,-5 L10,2 L10,-5" fill="none" stroke="#d02030" stroke-width="1"/><text x="4" y="-1" font-size="7" fill="#d02030" font-weight="bold">7</text><path d="M-7,8 L-1,1 L0,8Z" fill="#f0a030"/></g>
<g transform="translate(341,135)"><rect x="-10" y="-9" width="20" height="17" fill="url(#hatch)" stroke="#3a3a90" stroke-width="1.200"/></g>
<path d="M359,143.0 h6 l-3,3.5z" fill="#000"/>
<g transform="translate(393,135)"><text x="-8" y="-1" font-size="13" font-weight="bold" fill="#2030b0" text-anchor="middle">A</text><text x="3" y="9" font-family="Liberation Serif" font-size="20" font-weight="bold" font-style="italic" fill="#2030b0" text-anchor="middle">A</text><path d="M-8,11.500 H12" stroke="#2030b0" stroke-width="1.300"/></g>
<g transform="translate(424,135)"><path d="M-2,-9 L6,-12 L10,-3 L2,0Z" fill="#fff" stroke="#5060c0" stroke-width="1"/><path d="M-8,-2 q1,-5 5,-7 l1.500,1.500 q-4,2 -4.500,6z" fill="#111"/><g transform="translate(1,3) scale(1.0)" fill="none" stroke-linecap="round"><path d="M0.300,-0.300 L-5.200,5.200" stroke="#c8901c" stroke-width="5.400"/><path d="M6.390,-2.700 A3.400,3.400 0 1 1 2.700,-6.390" stroke="#c8901c" stroke-width="4.200" stroke-linecap="butt"/><path d="M0.300,-0.300 L-5.200,5.200" stroke="#fae060" stroke-width="3.800"/><path d="M6.390,-2.700 A3.400,3.400 0 1 1 2.700,-6.390" stroke="#fae060" stroke-width="2.600" stroke-linecap="butt"/><circle cx="-5.200" cy="5.200" r="0.900" fill="#fff" stroke="none"/></g></g>
<g transform="translate(455,135)"><rect x="-10" y="-10" width="19" height="20" fill="#fff"/><path d="M-4,-11 V8 M-10,-7 H10 M8,-11 V3 M-4,3 H10" stroke="#d02030" stroke-width="1.200" fill="none"/><path d="M-1,-7 l4,5" stroke="#e08020" stroke-width="2.400"/><circle cx="3" cy="2" r="1.800" fill="#111"/><rect x="-9" y="5" width="8" height="5" fill="#fff" stroke="#303080" stroke-width="1"/><circle cx="-4" cy="-7" r="1.5" fill="#e02030"/><circle cx="8" cy="-7" r="1.5" fill="#e02030"/></g>
<g transform="translate(487,135)"><rect x="-3" y="-12" width="14" height="14" fill="#fff" stroke="#303060" stroke-width="1.200"/><text x="4" y="0" font-size="13" font-weight="bold" text-anchor="middle" fill="#111">A</text><g transform="translate(-3,4) scale(1.0)" fill="none" stroke-linecap="round"><path d="M0.300,-0.300 L-5.200,5.200" stroke="#c8901c" stroke-width="5.400"/><path d="M6.390,-2.700 A3.400,3.400 0 1 1 2.700,-6.390" stroke="#c8901c" stroke-width="4.200" stroke-linecap="butt"/><path d="M0.300,-0.300 L-5.200,5.200" stroke="#fae060" stroke-width="3.800"/><path d="M6.390,-2.700 A3.400,3.400 0 1 1 2.700,-6.390" stroke="#fae060" stroke-width="2.600" stroke-linecap="butt"/><circle cx="-5.200" cy="5.200" r="0.900" fill="#fff" stroke="none"/></g></g>
<g transform="translate(517,135)"><path d="M-3,-10 H2 L8,-3" fill="none" stroke="#d02030" stroke-width="1.500"/><path d="M9.500,-0.500 L4.500,-2.500 L8.500,-6Z" fill="#d02030"/><g transform="translate(-2,3) scale(1.0)" fill="none" stroke-linecap="round"><path d="M0.300,-0.300 L-5.200,5.200" stroke="#c8901c" stroke-width="5.400"/><path d="M6.390,-2.700 A3.400,3.400 0 1 1 2.700,-6.390" stroke="#c8901c" stroke-width="4.200" stroke-linecap="butt"/><path d="M0.300,-0.300 L-5.200,5.200" stroke="#fae060" stroke-width="3.800"/><path d="M6.390,-2.700 A3.400,3.400 0 1 1 2.700,-6.390" stroke="#fae060" stroke-width="2.600" stroke-linecap="butt"/><circle cx="-5.200" cy="5.200" r="0.900" fill="#fff" stroke="none"/></g></g>
<g transform="translate(547,135)"><path d="M2,-12 V2 M-9,-5 H8" stroke="#4060c0" stroke-width="1.200"/><path d="M9,-5 h4" stroke="#d02030" stroke-width="2"/><g transform="translate(-1,3) scale(1.0)" fill="none" stroke-linecap="round"><path d="M0.300,-0.300 L-5.200,5.200" stroke="#c8901c" stroke-width="5.400"/><path d="M6.390,-2.700 A3.400,3.400 0 1 1 2.700,-6.390" stroke="#c8901c" stroke-width="4.200" stroke-linecap="butt"/><path d="M0.300,-0.300 L-5.200,5.200" stroke="#fae060" stroke-width="3.800"/><path d="M6.390,-2.700 A3.400,3.400 0 1 1 2.700,-6.390" stroke="#fae060" stroke-width="2.600" stroke-linecap="butt"/><circle cx="-5.200" cy="5.200" r="0.900" fill="#fff" stroke="none"/></g></g>
<g transform="translate(579,135)"><rect x="-9" y="-11" width="20" height="17" fill="url(#hatch)" stroke="#d02030" stroke-width="1.200"/><g transform="translate(-2,4) scale(1.0)" fill="none" stroke-linecap="round"><path d="M0.300,-0.300 L-5.200,5.200" stroke="#c8901c" stroke-width="5.400"/><path d="M6.390,-2.700 A3.400,3.400 0 1 1 2.700,-6.390" stroke="#c8901c" stroke-width="4.200" stroke-linecap="butt"/><path d="M0.300,-0.300 L-5.200,5.200" stroke="#fae060" stroke-width="3.800"/><path d="M6.390,-2.700 A3.400,3.400 0 1 1 2.700,-6.390" stroke="#fae060" stroke-width="2.600" stroke-linecap="butt"/><circle cx="-5.200" cy="5.200" r="0.900" fill="#fff" stroke="none"/></g></g>
<g transform="translate(610,135)"><path d="M-9,-11 L9,-4 V9 L-9,2Z" fill="#fff" stroke="#50508a" stroke-width="0.900"/><path d="M-9,-11 L9,-4" stroke="#5038c8" stroke-width="2.200"/><path d="M-9,-7 L9,0 M-9,-3 L9,4 M-4.500,-9 V4 M0,-7.500 V5.500 M4.500,-6 V7.500" stroke="#50508a" stroke-width="0.800"/><path d="M-1,8 h13 l-3,3 h-10z" fill="#9098b0"/><g transform="translate(-2,3) scale(1.0)" fill="none" stroke-linecap="round"><path d="M0.300,-0.300 L-5.200,5.200" stroke="#c8901c" stroke-width="5.400"/><path d="M6.390,-2.700 A3.400,3.400 0 1 1 2.700,-6.390" stroke="#c8901c" stroke-width="4.200" stroke-linecap="butt"/><path d="M0.300,-0.300 L-5.200,5.200" stroke="#fae060" stroke-width="3.800"/><path d="M6.390,-2.700 A3.400,3.400 0 1 1 2.700,-6.390" stroke="#fae060" stroke-width="2.600" stroke-linecap="butt"/><circle cx="-5.200" cy="5.200" r="0.900" fill="#fff" stroke="none"/></g></g>
<g transform="translate(641,135)"><path d="M-5,-5 L3,-8 L11,-5 L3,-2Z" fill="#f4f6fa" stroke="#8890a8" stroke-width="0.700"/><path d="M-5,-5 L3,-2 V7 L-5,4Z" fill="#dfe4ee" stroke="#8890a8" stroke-width="0.700"/><path d="M3,-2 L11,-5 V4 L3,7Z" fill="#b8c0d0" stroke="#8890a8" stroke-width="0.700"/><path d="M-12,-6 L-5,-1 L-12,4Z" fill="#d82020"/></g>
<g transform="translate(672,135)"><path d="M-5,-5 L3,-8 L11,-5 L3,-2Z" fill="#fff8b0" stroke="#c89018" stroke-width="0.700"/><path d="M-5,-5 L3,-2 V7 L-5,4Z" fill="#f8e040" stroke="#c89018" stroke-width="0.700"/><path d="M3,-2 L11,-5 V4 L3,7Z" fill="#e8b020" stroke="#c89018" stroke-width="0.700"/><path d="M-12,-6 L-5,-1 L-12,4Z" fill="#d82020"/></g>
<g transform="translate(703,135)"><rect x="-7" y="-11" width="18" height="15" fill="#b9bdcc" stroke="#9aa0b4"/><g transform="translate(-3,5) scale(1.0)" fill="none" stroke-linecap="round"><path d="M0.300,-0.300 L-5.200,5.200" stroke="#9aa0b4" stroke-width="5.400"/><path d="M6.390,-2.700 A3.400,3.400 0 1 1 2.700,-6.390" stroke="#9aa0b4" stroke-width="4.200" stroke-linecap="butt"/><path d="M0.300,-0.300 L-5.200,5.200" stroke="#9aa0b4" stroke-width="3.800"/><path d="M6.390,-2.700 A3.400,3.400 0 1 1 2.700,-6.390" stroke="#9aa0b4" stroke-width="2.600" stroke-linecap="butt"/><circle cx="-5.200" cy="5.200" r="0.900" fill="#fff" stroke="none"/></g></g>
<g transform="translate(735,135)"><rect x="-1" y="-8" width="12" height="14" fill="none" stroke="#9aa0b4" stroke-width="1.200"/><path d="M2,-11 h-6 M2,9 h-6" stroke="#9aa0b4" stroke-width="1.300"/><path d="M-6,-11 l3,-2.500 v5z M-6,9 l3,-2.500 v5z" fill="#9aa0b4"/><g transform="translate(-4,3) scale(1.0)" fill="none" stroke-linecap="round"><path d="M0.300,-0.300 L-5.200,5.200" stroke="#9aa0b4" stroke-width="5.400"/><path d="M6.390,-2.700 A3.400,3.400 0 1 1 2.700,-6.390" stroke="#9aa0b4" stroke-width="4.200" stroke-linecap="butt"/><path d="M0.300,-0.300 L-5.200,5.200" stroke="#9aa0b4" stroke-width="3.800"/><path d="M6.390,-2.700 A3.400,3.400 0 1 1 2.700,-6.390" stroke="#9aa0b4" stroke-width="2.600" stroke-linecap="butt"/><circle cx="-5.200" cy="5.200" r="0.900" fill="#fff" stroke="none"/></g></g>
<g transform="translate(766,135)"><rect x="-10" y="-6" width="9" height="15" fill="#9aa0b4"/><rect x="-4" y="-10" width="9" height="19" fill="#9aa0b4"/><rect x="2" y="-6" width="9" height="15" fill="#9aa0b4"/><path d="M-10,-6 h9 M2,-6 h9" stroke="#b9bdcc"/></g>
<g transform="translate(797,135)"><rect x="-6" y="-11" width="17" height="9" fill="#fff" stroke="#d04040" stroke-width="1.100"/><rect x="-6" y="0" width="17" height="8" fill="#fff" stroke="#d04040" stroke-width="1.100"/><circle cx="2" cy="-6.500" r="3" fill="none" stroke="#d04040"/><path d="M2,0 v8 M7,0 v8" stroke="#60a060"/><g transform="translate(-4,2) scale(1.0)" fill="none" stroke-linecap="round"><path d="M0.300,-0.300 L-5.200,5.200" stroke="#c8901c" stroke-width="5.400"/><path d="M6.390,-2.700 A3.400,3.400 0 1 1 2.700,-6.390" stroke="#c8901c" stroke-width="4.200" stroke-linecap="butt"/><path d="M0.300,-0.300 L-5.200,5.200" stroke="#fae060" stroke-width="3.800"/><path d="M6.390,-2.700 A3.400,3.400 0 1 1 2.700,-6.390" stroke="#fae060" stroke-width="2.600" stroke-linecap="butt"/><circle cx="-5.200" cy="5.200" r="0.900" fill="#fff" stroke="none"/></g></g>
<path d="M815,143.0 h6 l-3,3.5z" fill="#000"/>
<g transform="translate(850,135)"><rect x="-11" y="-2" width="20" height="11" fill="#fff" stroke="#303050" stroke-width="1.200"/><circle cx="-1" cy="3.500" r="3.300" fill="none" stroke="#111" stroke-width="1.200"/><g transform="translate(1,-6) scale(1.0)"><path d="M-7,2 L-1,-3 L5,-5 L7,-1 L1,4 L-5,5Z" fill="#f2c98a" stroke="#c08a50" stroke-width="0.8"/><path d="M3,-6 L8,-8 L10,-3 L6,-1Z" fill="#3030a0" stroke="#202070" stroke-width="0.6"/></g></g>
<g transform="translate(880,135)"><text x="-2" y="11" font-family="Liberation Serif" font-size="24" font-weight="bold" text-anchor="middle" fill="#111">A</text><g transform="translate(4,-7) scale(1.0)"><path d="M-7,2 L-1,-3 L5,-5 L7,-1 L1,4 L-5,5Z" fill="#f2c98a" stroke="#c08a50" stroke-width="0.8"/><path d="M3,-6 L8,-8 L10,-3 L6,-1Z" fill="#3030a0" stroke="#202070" stroke-width="0.6"/></g></g>
<g transform="translate(911,135)"><path d="M-10,-10 H4 V11 H-10 M-9,-2 H4" fill="none" stroke="#303050" stroke-width="1.300"/><path d="M9,-6 V3" stroke="#d02030" stroke-width="1.300"/><path d="M9,-9 l-2.200,4 h4.400z M9,6 l-2.200,-4 h4.400z" fill="#d02030"/></g>
<g transform="translate(942,135)"><rect x="-7" y="-2" width="13" height="12" fill="none" stroke="#9aa0b4" stroke-width="1.200"/><path d="M-2,-2 v12 M-7,4 h13" stroke="#b9bdcc"/><path d="M-8,-6 L4,-12 L10,-7 L-2,-1Z" fill="#9aa0b4"/><path d="M-10,5 V-2 M9,5 V-2" stroke="#9aa0b4" stroke-width="1.300"/><path d="M-10,-5 l-2.500,4 h5z M9,-5 l-2.500,4 h5z" fill="#9aa0b4"/></g>
<g transform="translate(973,135)"><rect x="-11" y="-10" width="21" height="11" fill="#fff" stroke="#303050" stroke-width="1.200"/><circle cx="0" cy="-4.500" r="3.300" fill="none" stroke="#111" stroke-width="1.200"/><path d="M-10,4.500 H9" stroke="#d02030" stroke-width="2"/><path d="M-8,8 H7" stroke="#d02030" stroke-width="1.300"/></g>
<path d="M992,143.0 h6 l-3,3.5z" fill="#000"/>
<path d="M6,180 h35" stroke="#222" stroke-width="2" stroke-dasharray="2 1.500"/>
<path d="M52,180 h35" stroke="#222" stroke-width="2" stroke-dasharray="2 1.500"/>
<g transform="translate(23,198)"><rect x="-7" y="-6" width="19" height="15" fill="url(#blu)" stroke="#4858b0" stroke-width="1.100"/><path d="M3,4 h9 M3,6.500 h9 M7,4 v5" stroke="#4858b0" stroke-width="0.700"/><rect x="3" y="4" width="9" height="5" fill="#fff" opacity="0.5"/><polygon points="-3.0,-8.0 -6.1,-7.2 -4.5,-4.5 -7.2,-6.1 -8.0,-3.0 -8.8,-6.1 -11.5,-4.5 -9.9,-7.2 -13.0,-8.0 -9.9,-8.8 -11.5,-11.5 -8.8,-9.9 -8.0,-13.0 -7.2,-9.9 -4.5,-11.5 -6.1,-8.8" fill="#e8f040" stroke="#9ab010" stroke-width="0.4"/></g>
<g transform="translate(23,229)"><rect x="-8" y="-4" width="20" height="14" fill="#b9bdcc" stroke="#9aa0b4"/><path d="M-8,-12 L-2,-14 L4,-5 L-2,-3Z" fill="#9aa0b4"/></g>
<g transform="translate(23,258)"><rect x="-7" y="-6" width="19" height="15" fill="url(#blu)" stroke="#4858b0" stroke-width="1.100"/><path d="M3,4 h9 M3,6.500 h9 M7,4 v5" stroke="#4858b0" stroke-width="0.700"/><rect x="3" y="4" width="9" height="5" fill="#fff" opacity="0.5"/><path d="M-13,-9 l3,-3 h5 l2,2 h5 v7 h-15z" fill="#f0d848" stroke="#b09818" stroke-width="0.800"/><path d="M-8,-12 q4,-3 7,0 l-2,2z" fill="#40b040"/></g>
<g transform="translate(23,289)"><rect x="-7" y="-6" width="19" height="15" fill="url(#blu)" stroke="#4858b0" stroke-width="1.100"/><path d="M3,4 h9 M3,6.500 h9 M7,4 v5" stroke="#4858b0" stroke-width="0.700"/><rect x="3" y="4" width="9" height="5" fill="#fff" opacity="0.5"/><path d="M-14,-12 L-1,0 M-2,-12 L-14,0" stroke="#111" stroke-width="2.400"/></g>
<path d="M6,307.500 H40" stroke="#fff"/><path d="M6,306.500 H40" stroke="#b0b6d4"/>
<g transform="translate(23,323)"><rect x="-13" y="-10" width="15" height="14" fill="#b9bdcc" stroke="#9aa0b4"/><circle cx="-6" cy="-3" r="4" fill="#9aa0b4"/><rect x="-6" y="-1" width="16" height="12" fill="#b9bdcc" stroke="#9aa0b4"/><path d="M2,-6 q5,0 5,5" stroke="#9aa0b4" fill="none" stroke-width="1.400"/></g>
<path d="M35,324.5 h6 l-3,3.5z" fill="#1a2a90"/>
<g transform="translate(23,357)"><rect x="-13" y="-10" width="15" height="14" fill="#b9bdcc" stroke="#9aa0b4"/><circle cx="-6" cy="-3" r="4" fill="#9aa0b4"/><rect x="-6" y="-1" width="16" height="12" fill="#b9bdcc" stroke="#9aa0b4"/><path d="M2,-6 q5,0 5,5" stroke="#9aa0b4" fill="none" stroke-width="1.400"/></g>
<g transform="translate(23,389)"><path d="M-12,0 L0,-11 L6,-5 L-6,7Z" fill="#9aa0b4"/><path d="M-2,-1 L6,-4 L12,0 V10 H-2Z" fill="#b9bdcc" stroke="#9aa0b4"/></g>
<g transform="translate(23,419)"><circle cx="5" cy="-4" r="6.500" fill="#b9bdcc" stroke="#9aa0b4" stroke-width="1.300"/><path d="M1,0 L-6,5" stroke="#9aa0b4" stroke-width="1.400"/><rect x="-13" y="3" width="10" height="8" fill="#b9bdcc" stroke="#9aa0b4"/></g>
<path d="M6,437.500 H40" stroke="#fff"/><path d="M6,436.500 H40" stroke="#b0b6d4"/>
<g transform="translate(23,455)"><circle cx="0" cy="2" r="8" fill="#b9bdcc" stroke="#9aa0b4" stroke-width="1.200"/><path d="M-8,3 a8,8 0 0 0 16,-1 q-8,4 -16,1z" fill="#9aa0b4"/><path d="M-10,4 V-6 M10,4 V-6" stroke="#9aa0b4" stroke-width="1.300"/><path d="M-10,-9 l-2.500,4 h5z M10,-9 l-2.500,4 h5z" fill="#9aa0b4"/></g>
<g transform="translate(23,486)"><circle cx="0" cy="2" r="8" fill="#b9bdcc" stroke="#9aa0b4" stroke-width="1.200"/><path d="M-8,3 a8,8 0 0 0 16,-1 q-8,4 -16,1z" fill="#9aa0b4"/><path d="M-10,4 V-6 M10,4 V-6" stroke="#9aa0b4" stroke-width="1.300"/><path d="M-10,-9 l-2.500,4 h5z M10,-9 l-2.500,4 h5z" fill="#9aa0b4"/></g>
<g transform="translate(23,518)"><circle cx="0" cy="2" r="8" fill="#b9bdcc" stroke="#9aa0b4" stroke-width="1.200"/><path d="M-8,3 a8,8 0 0 0 16,-1 q-8,4 -16,1z" fill="#9aa0b4"/><path d="M-10,4 V-6 M10,4 V-6" stroke="#9aa0b4" stroke-width="1.300"/><path d="M-10,-9 l-2.500,4 h5z M10,-9 l-2.500,4 h5z" fill="#9aa0b4"/></g>
<g transform="translate(23,549)"><path d="M-10,-10 H10 V-4 H-1 V3 H10 V10 H-10Z" fill="#b9bdcc" stroke="#9aa0b4" stroke-width="1.200"/><rect x="-10" y="3" width="20" height="7" fill="#9aa0b4"/></g>
<g transform="translate(23,580)"><rect x="-11" y="-10" width="22" height="20" fill="#9aa0b4" stroke="#9aa0b4"/><path d="M-7,9 a14,14 0 0 1 14,-14" stroke="#b9bdcc" fill="none" stroke-width="1.400"/></g>
<path d="M6,600.500 H40" stroke="#fff"/><path d="M6,599.500 H40" stroke="#b0b6d4"/>
<g transform="translate(23,617)"><path d="M-12,-4 h6 v-5 h6 v18 h-6 v-5 h-6z" fill="#9aa0b4"/><path d="M3,-7 q8,0 8,7 q0,7 -8,7 q3,-7 0,-14z" fill="#b9bdcc" stroke="#9aa0b4"/></g>
<path d="M6,637.500 H40" stroke="#fff"/><path d="M6,636.500 H40" stroke="#b0b6d4"/>
<g transform="translate(23,653)"><path d="M-8,-2 a6,6 0 1 1 10,4" fill="none" stroke="#9aa0b4" stroke-width="2.400"/><rect x="-5" y="-3" width="14" height="6" fill="#b9bdcc" stroke="#9aa0b4"/><rect x="-9" y="6" width="18" height="6" fill="#9aa0b4"/></g>
<path d="M6,690 l4,-3 v6z" fill="#111"/><path d="M34,686 l3,3 l3,-3 M34,690 l3,3 l3,-3" stroke="#111" stroke-width="1.300" fill="none"/>
<g transform="translate(63,198)"><path d="M-11,-9 V1 M10,-9 V1 M-11,-4 H10" stroke="#111" stroke-width="1.200"/><path d="M-12,-4 l4,-2 v4z M10,-4 l-4,-2 v4z" fill="#111"/><path d="M5,-8 L-3,1 L1,1.500 L-6,11 L6,-1 L2,-1.500 L8,-8Z" fill="#f0e020" stroke="#807010" stroke-width="0.700"/></g>
<path d="M81,194.5 h6 l-3,3.5z" fill="#1a2a90"/>
<g transform="translate(69,231)"><path d="M-11,-9 V1 M10,-9 V1 M-11,-4 H10" stroke="#111" stroke-width="1.200"/><path d="M-11,-4 l4,-2 v4z M10,-4 l-4,-2 v4z" fill="#111"/><path d="M5,-8 L-3,1 L1,1.500 L-6,11 L6,-1 L2,-1.500 L8,-8Z" fill="#f0e020" stroke="#807010" stroke-width="0.700"/></g>
<g transform="translate(69,258)"><path d="M-10,-10 V4 M10,-10 V4 M-10,-3 H10" stroke="#d02030" stroke-width="1.300"/><path d="M-10,-3 l4,-2.500 v5z M10,-3 l-4,-2.500 v5z" fill="#d02030"/><path d="M-11,7.500 H11" stroke="#111" stroke-width="1.600"/><text x="0" y="-5" font-size="8" font-weight="bold" fill="#d02030" text-anchor="middle">x</text></g>
<g transform="translate(69,291)"><path d="M-10,10 H9 M-10,10 L5,-8" stroke="#111" stroke-width="1.500" fill="none"/><path d="M3,-7 Q10,0 9,9" stroke="#d02030" stroke-width="1.300" fill="none"/><path d="M1,-8.500 l5,1 l-3,3z M9,11 l-2.500,-4.500 h5z" fill="#d02030"/></g>
<g transform="translate(69,321)"><path d="M-8,-11 H4 M-8,9 H4 M-3,-11 V9" stroke="#d02030" stroke-width="1.300"/><path d="M-3,-11 l-2.500,4 h5z M-3,9 l-2.500,-4 h5z" fill="#d02030"/><path d="M8,-12 V11" stroke="#111" stroke-width="1.600"/><text x="-7" y="2" font-size="8" font-weight="bold" fill="#d02030" text-anchor="middle">x</text></g>
<g transform="translate(69,351)"><path d="M-9,5 L-4,-3 L4,-8 M-9,5 L-1,12" stroke="#d02030" stroke-width="1.300" fill="none"/><path d="M-5,-2 l3,-3 M3,-7 l2,-4" stroke="#d02030"/><path d="M5,-7 h6 M8,-10 v6 M-9,13 h5 M-6.500,10.500 v5" stroke="#111" stroke-width="1.100"/><circle cx="-9" cy="5" r="1.6" fill="#e02030"/><circle cx="-4" cy="-3" r="1.6" fill="#e02030"/></g>
<g transform="translate(69,381)"><path d="M-9,5 L-4,-3 L4,-8 M-9,5 L-1,12" stroke="#d02030" stroke-width="1.300" fill="none"/><path d="M-5,-2 l3,-3 M3,-7 l2,-4" stroke="#d02030"/><path d="M5,-7 h6 M8,-10 v6 M-9,13 h5 M-6.500,10.500 v5" stroke="#111" stroke-width="1.100"/><circle cx="-9" cy="5" r="1.6" fill="#e02030"/><circle cx="-4" cy="-3" r="1.6" fill="#e02030"/></g>
<g transform="translate(69,413)"><path d="M-9,-8 a3.500,8 0 0 0 0,16 h5 a3.500,8 0 0 0 0,-16z" fill="#9098b0" stroke="#111" stroke-width="1.300"/><ellipse cx="-4" cy="0" rx="3.500" ry="8" fill="#d8dcec" stroke="#111" stroke-width="1.300"/><path d="M3,-9 V9" stroke="#d02030" stroke-width="1.300"/><path d="M3,-10 l-2.200,4 h4.400z M3,10 l-2.200,-4 h4.400z" fill="#d02030"/><text x="9" y="3" font-size="9" font-weight="bold" fill="#d02030" text-anchor="middle">ø</text></g>
<g transform="translate(69,444)"><circle cx="-4" cy="3" r="7" fill="none" stroke="#111" stroke-width="1.600"/><path d="M1,-2 L7,-8" stroke="#d02030" stroke-width="1.300"/><path d="M0,-1 l1.500,-5 l3,3.500z" fill="#d02030"/><text x="9" y="-5" font-size="9" font-weight="bold" fill="#d02030" text-anchor="middle">ø</text></g>
<g transform="translate(69,477)"><circle cx="0" cy="2" r="6.500" fill="none" stroke="#111" stroke-width="1.500"/><path d="M-11,-9 H-3 M-10,-8 L-5,-3 M5,7 L9,11" stroke="#d02030" stroke-width="1.200"/><path d="M-4,-2 l-1,-4 l-3,3z M4.500,6.500 l4,1 l-3,-4z" fill="#d02030"/><text x="5" y="-6" font-size="9" font-weight="bold" fill="#d02030" text-anchor="middle">ø</text></g>
<g transform="translate(69,507)"><path d="M-10,-4 C0,-4 4,2 4,12" fill="none" stroke="#111" stroke-width="1.600"/><path d="M-9,8 h5 M-6.500,5.500 v5" stroke="#111" stroke-width="1"/><path d="M-5,7 L6,-8" stroke="#d02030" stroke-width="1.200"/><path d="M2,-1 l1,-5 l3,3z" fill="#d02030"/><text x="10" y="-5" font-size="8" font-weight="bold" fill="#d02030" text-anchor="middle">R</text></g>
<g transform="translate(63,538)"><path d="M-11,-10 V0 M-4,-10 V3 M3,-10 V3 M10,-10 V0 M-11,-10 H10" stroke="#d04050" stroke-width="1.100" fill="none"/><path d="M-11,10 V0 H-5 V4 H4 V0 H10 V10Z" fill="#fff" stroke="#c8ccd8" stroke-width="0.600"/></g>
<path d="M81,536.5 h6 l-3,3.5z" fill="#1a2a90"/>
<g transform="translate(69,566)"><path d="M-10,0 H-2 M0,-8 V0" stroke="#4050b0" stroke-width="1.300"/><path d="M0,0 H7 M0,0 V10" stroke="#d02030" stroke-width="1.300"/><circle cx="9" cy="0" r="1.400" fill="none" stroke="#d02030"/><circle cx="0" cy="12" r="1.400" fill="none" stroke="#d02030"/></g>
<path d="M52,590 l4,-3 v6z" fill="#111"/>
<rect x="992" y="191" width="26" height="40" fill="url(#tile)"/>
<rect x="992" y="232" width="26" height="40" fill="url(#tile)"/>
<rect x="992" y="286" width="26" height="42" fill="url(#tile)"/>
<rect x="992" y="329" width="26" height="41" fill="url(#tile)"/>
<rect x="992" y="371" width="26" height="41" fill="url(#tile)"/>
<rect x="992" y="425" width="26" height="42" fill="url(#tile)"/>
<rect x="992" y="468" width="26" height="41" fill="url(#tile)"/>
<rect x="992" y="510" width="26" height="40" fill="url(#tile)"/>
<g transform="translate(1005,211)"><rect x="-12" y="-10" width="6" height="6" fill="#f0e040" stroke="#908010"/><rect x="-6" y="-4" width="6" height="6" fill="#f0e040" stroke="#908010"/><rect x="-12" y="-4" width="6" height="6" fill="#f0e040" stroke="#908010"/><path d="M0,0 h12 M-9,2 v9 h4 M5,11 h7" stroke="#404880" stroke-width="1.300" fill="none"/><rect x="-4" y="7" width="7" height="7" fill="#f0e040" stroke="#908010"/></g>
<g transform="translate(1005,252)"><path d="M-12,-9 v8 a3,1.500 0 0 0 7,0 v-8" fill="#f8d0d0" stroke="#a04040"/><ellipse cx="-8.500" cy="-9" rx="3.500" ry="1.700" fill="#fff" stroke="#a04040"/><path d="M-5,-2 h16 M-9,1 v10 h4 M6,11 h6" stroke="#404880" stroke-width="1.300" fill="none"/><circle cx="0" cy="11" r="4" fill="#fff" stroke="#c04040"/><circle cx="0" cy="11" r="1.500" fill="#c04040"/></g>
<g transform="translate(1005,307)"><path d="M-8,-11 h11 l6,6 v16 h-17z" fill="#f8e880" stroke="#c0a830"/><path d="M3,-11 v6 h6z" fill="#fff8c0" stroke="#c0a830" stroke-width="0.700"/><circle cx="0" cy="3" r="6" fill="url(#globe)"/><path d="M-3,0 q3,-3 5,1 q0,4 -3,5 q-3,-2 -2,-6z" fill="#40b050"/></g>
<g transform="translate(1005,349)"><path d="M-12,-5 L0,-11 L12,-5 L0,1Z" fill="#505058" stroke="#303038"/><path d="M-6,-2 V4 q6,4 12,0 V-2 L0,1Z" fill="#70707a" stroke="#404048"/><path d="M-9,-4 V5" stroke="#d02030" stroke-width="1.500"/><path d="M-10.500,5 h3 l0.500,6 h-4z" fill="#d02030"/></g>
<g transform="translate(1005,391)"><path d="M-9,-10 h18 v17 h-8 l1,5 l-6,-5 h-5z" fill="#fff8a0" stroke="#a0a040" stroke-width="1.200"/><text x="0" y="4" font-size="15" font-weight="bold" fill="#1a2a90" text-anchor="middle">?</text></g>
<g transform="translate(1005,446)"><circle cx="0" cy="0" r="10.500" fill="#e8ecf4" stroke="#8090a8" stroke-width="2"/><circle cx="0" cy="0" r="8" fill="#fff" stroke="#a0a8b8" stroke-width="0.800"/><path d="M0,-6.500 V0 H5" stroke="#202028" stroke-width="1.500" fill="none"/></g>
<g transform="translate(1005,488)"><path d="M-11,-7 l4,-2 v17 l-4,2z" fill="#e8e8f0" stroke="#808090"/><rect x="-6" y="-10" width="16" height="20" fill="#fff" stroke="#808090"/><circle cx="-1" cy="-5" r="2" fill="#3050d0"/><circle cx="-1" cy="0" r="2" fill="#30b040"/><circle cx="-1" cy="5" r="2" fill="#e02060"/><path d="M3,-5 h5 M3,0 h5 M3,5 h5" stroke="#9090a0"/></g>
<g transform="translate(1005,530)"><circle cx="6" cy="-5" r="4.500" fill="#f0c080" stroke="#b08040" stroke-width="0.600"/><path d="M1,-7 q5,-6 10,0 q-5,-2 -10,0z" fill="#d0a020"/><path d="M-1,8 q0,-8 7,-8 q7,0 7,8z" fill="#309040" stroke="#206030" stroke-width="0.600"/><circle cx="-5" cy="0" r="4.500" fill="#f0c080" stroke="#b08040" stroke-width="0.600"/><path d="M-10,-1 q0,-6 5,-6 q5,0 5,6 q-5,-4 -10,0z" fill="#604020"/><path d="M-12,12 q0,-8 7,-8 q7,0 7,8z" fill="#a040c0" stroke="#602080" stroke-width="0.600"/></g>
<path d="M4,704 v26" stroke="#fff" stroke-width="1"/><path d="M5,704 v26" stroke="#a4abcd" stroke-width="1"/>
<path d="M195,704 v26" stroke="#fff" stroke-width="1"/><path d="M196,704 v26" stroke="#a4abcd" stroke-width="1"/>
<path d="M378,704 v26" stroke="#fff" stroke-width="1"/><path d="M379,704 v26" stroke="#a4abcd" stroke-width="1"/>
<path d="M615,704 v26" stroke="#fff" stroke-width="1"/><path d="M616,704 v26" stroke="#a4abcd" stroke-width="1"/>
<path d="M79,715.5 h6 l-3,3.5z" fill="#000"/>
<g transform="translate(111,717)"><rect x="-11" y="-11" width="22" height="22" fill="#fdf0f0" stroke="#d02030" stroke-width="1.300"/><circle cx="-3" cy="-3" r="4" fill="none" stroke="#d02030" stroke-width="1.200"/><path d="M-3,-10 V4 M-10,-3 H4" stroke="#111" stroke-width="1.100"/><path d="M0,1 h10 l-4,4 v5 h-2.500 v-5z" fill="#f0c030" stroke="#b08818" stroke-width="0.700"/></g>
<path d="M126,711.5 h6 l-3,3.5z" fill="#000"/>
<g transform="translate(158,717)"><path d="M-11,-9 q3,-3 6,0 l4,1 l3,4 h-5 l-3,-2z" fill="#9aa0b4"/><rect x="2" y="-2" width="7" height="9" fill="#b9bdcc" stroke="#9aa0b4"/><path d="M5,-2 v13 M2,11 h7" stroke="#9aa0b4" stroke-width="1.200"/></g>
<path d="M175,724.5 h6 l-3,3.5z" fill="#000"/>
<g transform="translate(210,717)"><path d="M-10,5 L0,1 L10,5 L0,9Z" fill="#e8f4ec" stroke="#5a9068" stroke-width="0.800"/><path d="M-10,1.500 L0,-2.500 L10,1.500 L0,5.500Z" fill="#d8ecdc" stroke="#5a9068" stroke-width="0.800"/><path d="M-10,-2 L0,-6 L10,-2 L0,2Z" fill="#c8e4d0" stroke="#5a9068" stroke-width="0.800"/><path d="M-10,-5.500 L0,-9.500 L10,-5.500 L0,-1.500Z" fill="#b4dcc0" stroke="#4a8058" stroke-width="0.800"/><rect x="-1" y="-2" width="11" height="12" fill="#fff" stroke="#506090"/><path d="M1,1 h7 M1,4 h7 M1,7 h7" stroke="#506090" stroke-width="0.800"/></g>
<g transform="translate(241,717)"><path d="M-10,5 L0,1 L10,5 L0,9Z" fill="#e8f4ec" stroke="#5a9068" stroke-width="0.800"/><path d="M-10,1.500 L0,-2.500 L10,1.500 L0,5.500Z" fill="#d8ecdc" stroke="#5a9068" stroke-width="0.800"/><path d="M-10,-2 L0,-6 L10,-2 L0,2Z" fill="#c8e4d0" stroke="#5a9068" stroke-width="0.800"/><path d="M-10,-5.500 L0,-9.500 L10,-5.500 L0,-1.500Z" fill="#b4dcc0" stroke="#4a8058" stroke-width="0.800"/><rect x="-2" y="1" width="13" height="10" fill="url(#blu)" stroke="#3078c0"/></g>
<g transform="translate(277,717)"><path d="M-11,0 C-11,-8 -3,-11 3,-10 C10,-9 12,-4 10,0 C8,3 4,1 3,4 C2,8 -2,10 -6,8 C-10,6 -11,4 -11,0Z" fill="#f8ecc0" stroke="#c8a050" stroke-width="0.900"/><circle cx="-5" cy="-4" r="1.800" fill="#e03030"/><circle cx="1" cy="-6.500" r="1.800" fill="#3060e0"/><circle cx="6" cy="-3" r="1.800" fill="#30b040"/><circle cx="7" cy="-7" r="1.500" fill="#f0a020"/><g transform="translate(-3,5) scale(1.0)" fill="none" stroke-linecap="round"><path d="M0.300,-0.300 L-5.200,5.200" stroke="#c8901c" stroke-width="5.400"/><path d="M6.390,-2.700 A3.400,3.400 0 1 1 2.700,-6.390" stroke="#c8901c" stroke-width="4.200" stroke-linecap="butt"/><path d="M0.300,-0.300 L-5.200,5.200" stroke="#fae060" stroke-width="3.800"/><path d="M6.390,-2.700 A3.400,3.400 0 1 1 2.700,-6.390" stroke="#fae060" stroke-width="2.600" stroke-linecap="butt"/><circle cx="-5.200" cy="5.200" r="0.900" fill="#fff" stroke="none"/></g></g>
<g transform="translate(308,717)"><path d="M-9.5,-5 L-3,-11.5 L3.5,-5 L-3,1.5Z" fill="#2c3c9c" stroke="#2a3480" stroke-width="0.900"/><path d="M-3.5,-9 L0.5,-5 L-3.5,-1Z" fill="#fff"/><path d="M-1.5,4 L5,-2.5 L11.5,4 L5,10.5Z" fill="#e4e8fa" stroke="#2a3480" stroke-width="0.900"/><path d="M4.5,0 L8.5,4 L4.5,8Z" fill="#b8c0ec"/><path d="M-9,1 q1,4 5,4" fill="none" stroke="#e86828" stroke-width="2"/><path d="M-5,2.500 l4,2.500 l-4,2.500z" fill="#e86828"/></g>
<g transform="translate(339,717)"><path d="M-9.5,-5 L-3,-11.5 L3.5,-5 L-3,1.5Z" fill="#e4e8fa" stroke="#2a3480" stroke-width="0.900"/><path d="M-3.5,-9 L0.5,-5 L-3.5,-1Z" fill="#b8c0ec"/><path d="M-1.5,4 L5,-2.5 L11.5,4 L5,10.5Z" fill="#2c3c9c" stroke="#2a3480" stroke-width="0.900"/><path d="M4.5,0 L8.5,4 L4.5,8Z" fill="#fff"/><path d="M-9,1 q1,4 5,4" fill="none" stroke="#e86828" stroke-width="2"/><path d="M-5,2.500 l4,2.500 l-4,2.500z" fill="#e86828"/></g>
<path d="M358,724.5 h6 l-3,3.5z" fill="#000"/>
<g transform="translate(393,717)"><path d="M-9,9 L9,-9" stroke="#a4a8b8" stroke-width="1.400"/><circle cx="9" cy="-9" r="1.500" fill="#a4a8b8"/></g>
<g transform="translate(424,717)"><path d="M-9,9 L9,-9" stroke="#a4a8b8" stroke-width="1.400"/><circle cx="0" cy="0" r="1.800" fill="#a4a8b8"/></g>
<g transform="translate(456,717)"><path d="M-9,-9 C-4,-9 -2,-6 -1,0 S4,9 9,9" fill="none" stroke="#a4a8b8" stroke-width="1.400"/><circle cx="-1" cy="0" r="1.600" fill="#a4a8b8"/></g>
<g transform="translate(487,717)"><path d="M0,-10 V10 M-11,6 C-6,-4 6,-4 11,6" fill="none" stroke="#a4a8b8" stroke-width="1.400"/></g>
<g transform="translate(518,717)"><circle cx="0" cy="0" r="9.500" fill="none" stroke="#a4a8b8" stroke-width="1.400"/><circle cx="0" cy="0" r="1.500" fill="#a4a8b8"/></g>
<g transform="translate(549,717)"><circle cx="0" cy="0" r="9.500" fill="none" stroke="#a4a8b8" stroke-width="1.400"/><circle cx="0" cy="-9.500" r="1.600" fill="#a4a8b8"/><circle cx="0" cy="9.500" r="1.600" fill="#a4a8b8"/><circle cx="-9.500" cy="0" r="1.600" fill="#a4a8b8"/><circle cx="9.500" cy="0" r="1.600" fill="#a4a8b8"/></g>
<g transform="translate(579,716)"><path d="M-8,0 H8 M0,-8 V8" stroke="#a4a8b8" stroke-width="1.400"/></g>
<path d="M597,724.5 h6 l-3,3.5z" fill="#000"/>
<g transform="translate(631,717)"><path d="M-11,-5 V1 M11,-5 V1 M-11,-2 H11" stroke="#2838a0" stroke-width="1.200"/><rect x="-11" y="3" width="22" height="6" fill="#f4d870" stroke="#b09030"/><path d="M-7,3 v3 M-3,3 v3 M1,3 v3 M5,3 v3 M9,3 v3" stroke="#806010" stroke-width="0.800"/></g>
<g transform="translate(663,717)"><path d="M-7,-11 L12,6 L8,10 L-11,-7Z" fill="#f4d870" stroke="#b09030"/><path d="M-9,11 V-1 a12,12 0 0 1 12,12Z" fill="none" stroke="#d02030" stroke-width="1.400"/></g>
<path d="M681,724.5 h6 l-3,3.5z" fill="#000"/>
<circle cx="30" cy="756" r="19.500" fill="#0a1a50" opacity="0.800"/><circle cx="30.500" cy="755" r="16.500" fill="url(#orb)" stroke="#7fb0f0" stroke-width="1"/>
<path d="M20.500,747.500 q4.500,-2.800 9,-0.500 l-1.200,7 q-4.500,-1.800 -9,0.500z" fill="#e8602a"/><path d="M31,746.800 q4.500,-1.800 9,1.200 l-1.200,7 q-4.500,-2.300 -9,-0.700z" fill="#80c838"/><path d="M19,756.200 q4.500,-2.300 9,-0.600 l-1.200,7 q-4.500,-1.700 -9,0.600z" fill="#38a8f0"/><path d="M29.500,755.600 q4.500,-1.200 9,1.100 l-1.200,7 q-4.500,-2.300 -9,-1.100z" fill="#f8d030"/>
<path d="M15,750 a16.500,13 0 0 1 31,0 q-15.500,-7 -31,0z" fill="#fff" opacity="0.250"/>
<path d="M68.5,743 v24 M72.0,743 v24" stroke="#0c1f5c" stroke-width="1.800" stroke-dasharray="1.800 2.200"/><path d="M69.2,743.700 v24 M72.7,743.700 v24" stroke="#5f86d8" stroke-width="1" stroke-dasharray="1 3"/>
<path d="M152,743 v24 M155.5,743 v24" stroke="#0c1f5c" stroke-width="1.800" stroke-dasharray="1.800 2.200"/><path d="M152.7,743.700 v24 M156.2,743.700 v24" stroke="#5f86d8" stroke-width="1" stroke-dasharray="1 3"/>
<path d="M908.5,743 v24 M912.0,743 v24" stroke="#0c1f5c" stroke-width="1.800" stroke-dasharray="1.800 2.200"/><path d="M909.2,743.700 v24 M912.7,743.700 v24" stroke="#5f86d8" stroke-width="1" stroke-dasharray="1 3"/>
<g transform="translate(88,752.5)"><text x="0" y="6.500" font-size="19" font-weight="bold" fill="#58b8f8" text-anchor="middle">e</text><ellipse cx="0" cy="0" rx="10" ry="3.500" transform="rotate(-35)" fill="none" stroke="#f0c020" stroke-width="1.600"/></g>
<g transform="translate(109,752.5)"><rect x="-6.500" y="-6.500" width="12" height="13" rx="3" fill="#f4f8ff" stroke="#5888d8"/><text x="-0.500" y="4" font-size="11" font-weight="bold" fill="#2058c0" text-anchor="middle">e</text><path d="M2,1 l5,-7" stroke="#e0a040" stroke-width="1.800"/></g>
<g transform="translate(132.5,752.5)"><path d="M-5,-8 l10,-1 v16 l-10,1z" fill="#c8d0e4" stroke="#8090b8"/><rect x="-3.500" y="-6" width="7" height="4" fill="#8fa0c8"/><path d="M-3,1 h7 M-3,4 h7" stroke="#7888b0" stroke-width="1.500" stroke-dasharray="1.500 1"/></g>
<g transform="translate(178,753) scale(0.72)"><circle cx="0" cy="0.5" r="9.5" fill="url(#globe)"/><path d="M-2,-3 q4,-2 6,2 q1,4 -2,7 q-4,1 -5,-3 q-1,-3 1,-6z" fill="#30a040" opacity="0.9"/><path d="M-7,4 q2,3 4,5 q-3,0 -5,-3z" fill="#30a040" opacity="0.8"/><ellipse cx="0.500" cy="1" rx="13" ry="4.200" transform="rotate(-32 0.500 1)" fill="none" stroke="#e8c020" stroke-width="2"/><path d="M-8,-2 a9.500,9.500 0 0 1 16,-3" fill="none" stroke="url(#globe)" stroke-width="3" opacity="0"/><path d="M-9,-11 L2.500,-11 L-1.500,-0.500Z" fill="#e02028" stroke="#a01018" stroke-width="0.6"/><path d="M-9,-11 L-3,-9 L-1.500,-0.500Z" fill="#ff6060" opacity="0.6"/></g>
<g transform="translate(338,753)"><rect x="-8" y="-8.500" width="16" height="16.500" fill="#f4f8f4" stroke="#208050" stroke-width="1.200"/><path d="M-5.500,5 L-1,-6.500 L3.500,5 M-3.500,1 h5" stroke="#208050" stroke-width="1.300" fill="none"/><rect x="1.500" y="1.500" width="5.500" height="5.500" fill="#fff" stroke="#208050"/></g>
<g transform="translate(497,753)"><path d="M-4.500,8 l1,-9 h7 l1,9z" fill="#d8a850" stroke="#805820"/><path d="M-3,-1 l-1,-7 M0,-1 v-8 M3,-1 l2,-7" stroke="#e0e0e8" stroke-width="1.500"/><circle cx="-4" cy="-8" r="1.200" fill="#e03030"/><circle cx="5" cy="-8" r="1.200" fill="#30a0e0"/></g>
<g transform="translate(926,754)"><rect x="-6.500" y="-4" width="13" height="9" rx="1" fill="#f0f0f0" stroke="#202020"/><path d="M-4.500,-1.500 h9 M-4.500,0.800 h9 M-4.500,3 h9" stroke="#303030" stroke-width="1" stroke-dasharray="1.200 0.800"/><path d="M-4,-6 q2,-1.500 3,0 t3,0 t2,0" stroke="#fff" fill="none" stroke-width="0.800"/></g>
<g transform="translate(955.5,753)"><rect x="-7.500" y="-8" width="15.500" height="16" fill="#2030c8" stroke="#c02020" stroke-width="0.800"/><path d="M-6,5 L1,-4 L-1,2 L6,-6 L4,6Z" fill="#e02030"/><circle cx="-5" cy="-5" r="2.600" fill="#f8e828"/><rect x="-7" y="5" width="14.500" height="2.500" fill="#909090"/></g>
<g transform="translate(974,753)"><path d="M-6,-5.500 q3,-0.500 6,-2.500 q3,2 6,2.500 q0.500,9 -6,13 q-6.500,-4 -6,-13z" fill="#58c838" stroke="#c8f0b0" stroke-width="1.200"/><path d="M-3,0 h6 M0,-3 v6" stroke="#fff" stroke-width="2"/></g>
</svg><!-- message dialog -->
<div class="a" style="left:395px;top:311px;width:407px;height:109px;background:#2448a4;border-radius:7px 7px 0 0;box-shadow:0 0 0 1px #1a2f7a inset">
 <div class="a" style="left:0;top:0;width:407px;height:27px;border-radius:7px 7px 0 0;background:linear-gradient(#4f79cf 0,#3860bb 12%,#2447a2 35%,#19378b 65%,#15307a 100%)"></div>
 <div class="a" style="left:9px;top:8px;font:bold 13px 'Liberation Sans',sans-serif;color:#fff;white-space:nowrap;letter-spacing:-0.58px;text-shadow:1px 1px 0 #0e2260">Surface Finish Message</div>
 <div class="a" style="left:3px;top:27px;width:401px;height:79px;background:#f4f4f3"></div>
 <div class="a" style="left:56px;top:38px;font:11px 'Liberation Sans',sans-serif;color:#000;white-space:nowrap;letter-spacing:-0.08px" id="msg">You must be in drafting mode before entering the Surface Finish dialog</div>
 <div class="a" style="left:174px;top:80px;width:58px;height:18px;border:1px solid #6f9a5c;border-radius:3px;background:linear-gradient(#c9dcbb,#a6c691 60%,#9cbf85)"></div>
 <div class="a" style="left:177px;top:83px;width:52px;height:12px;border:1px dotted #222"></div>
 <div class="a" style="left:174px;top:82px;width:60px;text-align:center;font:12px 'Liberation Sans',sans-serif"><u>O</u>K</div>
</div>
<svg class="a" style="left:395px;top:311px;overflow:visible" width="407" height="112" viewBox="395 311 407 112">
 <defs><radialGradient id="ib" cx="0.4" cy="0.3" r="0.8"><stop offset="0" stop-color="#ffffff"/><stop offset="0.5" stop-color="#dce8f5"/><stop offset="1" stop-color="#7f9cc8"/></radialGradient></defs>
 <path d="M421.5,346.5 c9,0 15.5,5.3 15.5,12.2 c0,6.3 -5.5,11 -12.5,12 l-4.5,7 l-2,-6.8 c-7,-1.2 -12,-6 -12,-12.2 c0,-6.900 6.500,-12.200 15.500,-12.200z" fill="url(#ib)" stroke="#9db2cf" stroke-width="1"/>
 <text x="421.5" y="368" font-family="Liberation Serif, serif" font-weight="bold" font-size="24" fill="#17338f" text-anchor="middle">i</text>
 <path d="M442.600,406 V340.500 H519 C560,341 590,344.500 610,345 C640,344.500 680,344 723,345 L791,345 L791.500,385.500 C791,390 790,392 788.700,394 L783.300,403.700 C776,408 768,411 761.900,413.400 L751,418.800 C700,420.500 520,420.500 477,419 L476,417.300 Z" fill="none" stroke="#000" stroke-width="1.2" stroke-linejoin="round"/>
 <path d="M458.700,369 C480,370 500,372 519,373 C535,373.500 545,373.500 555.400,373 C565,371 574,368.500 583,367 C592,365.500 600,363 611.500,362.300 C620,361.800 626,361.800 633,362.500 C639,364.500 644,367 650,369.400 C662,372.500 674,375 686.700,376.500 C697,377.200 707,377.200 716.700,376.500 C725,375 732,373 740.400,372.200 C752,371.300 764,371 775.800,371" fill="none" stroke="#000" stroke-width="1.2"/>
</svg>
</body></html>
